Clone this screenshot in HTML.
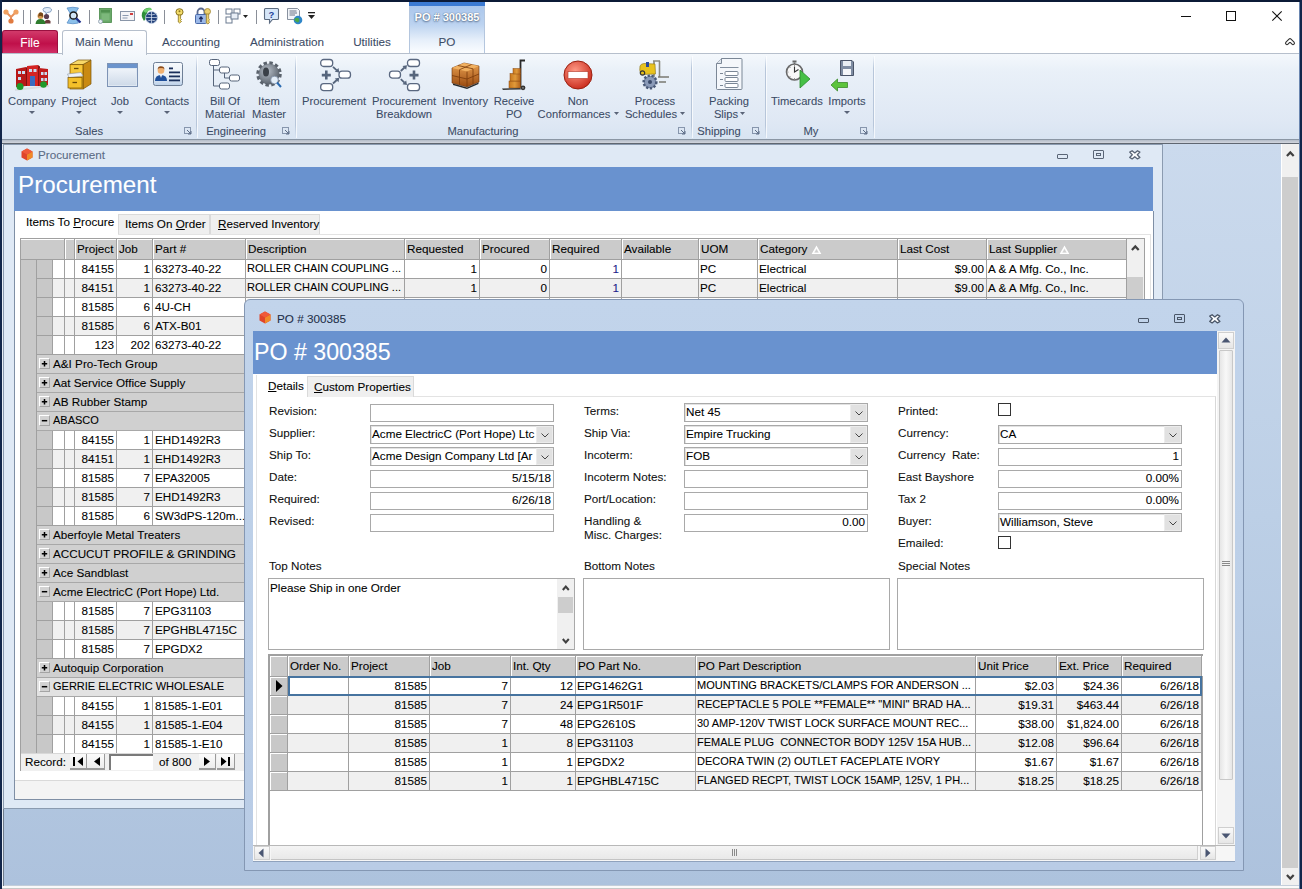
<!DOCTYPE html><html><head><meta charset="utf-8"><style>
*{box-sizing:border-box}
html,body{margin:0;padding:0}
body{width:1302px;height:889px;overflow:hidden;position:relative;background:#fff;font-family:"Liberation Sans",sans-serif;font-size:11.7px;color:#000}
.t{position:absolute;white-space:nowrap;line-height:15px;-webkit-text-stroke:0.08px currentColor}
.a{position:absolute}
svg.a{overflow:visible}
</style></head><body><div class="a" style="left:0px;top:0px;width:1302px;height:53px;background:#fff"></div>
<svg class="a" style="left:3px;top:8px;" width="16" height="16" viewBox="0 0 16 16"><line x1="3" y1="4" x2="8" y2="9" stroke="#e8905a" stroke-width="2"/><line x1="13" y1="4" x2="8" y2="9" stroke="#e8905a" stroke-width="2"/><line x1="8" y1="9" x2="8" y2="13" stroke="#e8905a" stroke-width="2"/><circle cx="3" cy="4" r="2.6" fill="#f0a060"/><circle cx="13" cy="4" r="2.6" fill="#f0a060"/><circle cx="8" cy="13" r="2.6" fill="#e07a40"/></svg>
<div class="a" style="left:23px;top:10px;width:1px;height:14px;background:#8a8f98"></div>
<div class="a" style="left:30px;top:10px;width:1px;height:14px;background:#8a8f98"></div>
<svg class="a" style="left:35px;top:7px;" width="17" height="17" viewBox="0 0 17 17"><path d="M8 2.5 Q8 0.5 12 0.5 Q16.5 0.5 16.5 3 Q16.5 5.5 12.5 5.5 L11 7 L11 5.3 Q8 5 8 2.5Z" fill="#e4eef9" stroke="#6f8fb5" stroke-width=".8"/><circle cx="11.5" cy="9.5" r="2.6" fill="#5a3f52"/><path d="M8 16.5 Q11.5 10.5 15.5 14 L15.5 16.5Z" fill="#6a3a3a"/><circle cx="5.5" cy="9" r="3" fill="#d59a52"/><path d="M4 6 Q5.5 4.5 8 6.5 L8 10 Q5 8 3 10Z" fill="#7a4a1a"/><path d="M0.5 17 Q1 12 5.5 12 Q10 12 10.5 17Z" fill="#2f7d2f"/></svg>
<div class="a" style="left:58px;top:10px;width:1px;height:14px;background:#8a8f98"></div>
<svg class="a" style="left:66px;top:7px;" width="16" height="17" viewBox="0 0 16 17"><path d="M1 1 Q7 -0.5 12.5 1 L9.5 6 Q8 8.5 9.5 11 L12.5 16 Q7 17.5 1 16 L4 11 Q5.5 8.5 4 6Z" fill="#8cc0ea" stroke="#5a8fc8" stroke-width=".8"/><circle cx="7.5" cy="8.5" r="3.6" fill="#eef6fc" fill-opacity=".7" stroke="#1a1a1a" stroke-width="1.5"/><line x1="10.2" y1="11.2" x2="14.5" y2="15.5" stroke="#1c2f8a" stroke-width="2.2"/></svg>
<div class="a" style="left:89px;top:10px;width:1px;height:14px;background:#8a8f98"></div>
<svg class="a" style="left:98px;top:8px;" width="14" height="16" viewBox="0 0 14 16"><rect x="1.5" y="0.5" width="12" height="14" fill="#69a868" stroke="#4a8a4a" stroke-width=".8"/><rect x="3" y="2" width="9" height="2.5" fill="#4f904f"/><rect x="3.5" y="5.5" width="8" height="7" fill="#7cb87b"/><circle cx="2.5" cy="13.5" r="2" fill="#e6eef4" stroke="#8a9aa8" stroke-width=".8"/></svg>
<svg class="a" style="left:120px;top:10px;" width="15" height="12" viewBox="0 0 15 12"><rect x="0.5" y="1.5" width="14" height="9" fill="#f4f4f6" stroke="#8a96a8"/><line x1="2.5" y1="5.5" x2="8.5" y2="5.5" stroke="#8090a8" stroke-width=".9"/><line x1="2.5" y1="8" x2="7.5" y2="8" stroke="#8090a8" stroke-width=".9"/><rect x="10" y="3" width="3" height="2" fill="#d04040"/></svg>
<svg class="a" style="left:141px;top:7px;" width="17" height="17" viewBox="0 0 17 17"><path d="M3 14 Q-1 8 2 4 Q5 0 10 1 Q6 3 6 7 Q6 11 3 14Z" fill="#2e8f3a"/><path d="M2 4 Q5 0.5 10 1 L11 3 Q7 3 5 6Z" fill="#6fcf6f"/><circle cx="10.5" cy="10.5" r="6" fill="#22407a" stroke="#c8d4e6" stroke-width=".8"/><path d="M4.8 10.5 H16.2 M10.5 4.5 V16.5 M6.5 7 Q10.5 9 14.5 7 M6.5 14 Q10.5 12 14.5 14" stroke="#dfe8f5" stroke-width=".7" fill="none"/></svg>
<div class="a" style="left:164px;top:10px;width:1px;height:14px;background:#8a8f98"></div>
<svg class="a" style="left:175px;top:8px;" width="9" height="16" viewBox="0 0 9 16"><ellipse cx="4.5" cy="4" rx="3.6" ry="3.3" fill="#f3dc6a" stroke="#8a7420" stroke-width="1"/><circle cx="4.5" cy="3.3" r="1" fill="#8a7420"/><path d="M3.3 7 V14 L4.5 15 L6.5 13.5 L5.5 12.5 L6.5 11.5 L5.5 10.5 L5.7 7Z" fill="#f3dc6a" stroke="#8a7420" stroke-width=".8"/></svg>
<svg class="a" style="left:194px;top:7px;" width="17" height="17" viewBox="0 0 17 17"><path d="M3.5 8 V5 A3.5 3.5 0 0 1 10.5 5 V8" fill="none" stroke="#5a6a90" stroke-width="1.8"/><rect x="1.5" y="7.5" width="11" height="9" rx="1" fill="#9bb8e8" stroke="#4a6aa8"/><path d="M7 15 V10.5 M5.3 12 L7 10 L8.7 12" stroke="#1a2a60" stroke-width="1.3" fill="none"/><ellipse cx="13.5" cy="4.5" rx="3" ry="3" fill="#ecd070" stroke="#9a8030" stroke-width=".8"/><path d="M12.3 7 V16 L14 17 L15.5 15.5 L14.7 14 L15.5 12.5 L14.7 11.5 V7Z" fill="#ecd070" stroke="#9a8030" stroke-width=".8"/></svg>
<div class="a" style="left:218px;top:10px;width:1px;height:14px;background:#8a8f98"></div>
<svg class="a" style="left:225px;top:8px;" width="24" height="16" viewBox="0 0 24 16"><rect x="1" y="1" width="6" height="5" fill="#fff" stroke="#6a7a90"/><rect x="9" y="1" width="6" height="5" fill="#fff" stroke="#6a7a90"/><rect x="1" y="9" width="6" height="6" fill="#fff" stroke="#6a7a90"/><rect x="6" y="5" width="7" height="6" fill="#e8eef6" stroke="#6a7a90"/><path d="M18 7 L23 7 L20.5 10Z" fill="#222"/></svg>
<div class="a" style="left:256px;top:10px;width:1px;height:14px;background:#8a8f98"></div>
<svg class="a" style="left:264px;top:8px;" width="15" height="16" viewBox="0 0 15 16"><path d="M1.5 0.5 H13.5 Q14.5 0.5 14.5 1.5 V10.5 Q14.5 11.5 13.5 11.5 H8.5 L5.5 15 V11.5 H1.5 Q0.5 11.5 0.5 10.5 V1.5 Q0.5 0.5 1.5 0.5Z" fill="#d6e6f8" stroke="#5c6b80" stroke-width="1.1"/><text x="7.5" y="9.5" font-size="9.5" font-family="Liberation Sans" font-weight="bold" text-anchor="middle" fill="#243f9a">?</text></svg>
<svg class="a" style="left:287px;top:8px;" width="16" height="17" viewBox="0 0 16 17"><path d="M0.5 0.5 H10.5 L12.5 2.5 V11.5 H0.5Z" fill="#f2f5f9" stroke="#7a8494" stroke-width=".9"/><path d="M2.5 3 H9.5 M2.5 5 H10 M2.5 7 H8" stroke="#5a6478" stroke-width=".9"/><circle cx="11" cy="12" r="4.3" fill="#2f86c8"/><path d="M7.5 11 Q9.5 9 12 10.5 Q13 12.5 11 14.5 Q9 14 7.5 12.5Z" fill="#4aa84a"/></svg>
<svg class="a" style="left:307px;top:12px;" width="9" height="8" viewBox="0 0 9 8"><rect x="1" y="0" width="7" height="1.3" fill="#222"/><path d="M1 3 L8 3 L4.5 7Z" fill="#222"/></svg>
<div class="a" style="left:409px;top:1px;width:76px;height:52px;background:linear-gradient(#a6c3ea,#bcd3f0 45%,#e6effa 75%,#fbfdff);border-left:1px solid #b4c6de;border-right:1px solid #b4c6de"></div>
<div class="a" style="left:409px;top:1px;width:76px;height:5px;background:#3b7ad2"></div>
<div class="t" style="left:297px;top:10px;width:300px;text-align:center;color:#fff;font-size:11px;text-shadow:0 0 1px #3a5070,0 1px 2px #5a7090"><b>PO # 300385</b></div>
<div class="a" style="left:1181px;top:16px;width:10px;height:1px;background:#111"></div>
<div class="a" style="left:1226px;top:11px;width:10px;height:10px;border:1px solid #111"></div>
<svg class="a" style="left:1272px;top:11px;" width="10" height="10" viewBox="0 0 10 10"><line x1="0.3" y1="0.3" x2="9.7" y2="9.7" stroke="#111" stroke-width="1.1"/><line x1="9.7" y1="0.3" x2="0.3" y2="9.7" stroke="#111" stroke-width="1.1"/></svg>
<svg class="a" style="left:1285px;top:38px;" width="10" height="8" viewBox="0 0 10 8"><path d="M2 5.2 L5 2.2 L8 5.2" fill="none" stroke="#333" stroke-width="4" stroke-linecap="round" stroke-linejoin="round"/><path d="M2 5.2 L5 2.2 L8 5.2" fill="none" stroke="#fff" stroke-width="1.8" stroke-linecap="round" stroke-linejoin="round"/></svg>
<div class="a" style="left:2px;top:30px;width:56px;height:24px;background:linear-gradient(#d23a6a,#c0104a 55%,#d2346a);border:1px solid #9a1040;border-bottom:none;border-radius:3px 3px 0 0"></div>
<div class="t" style="left:-120px;top:36px;width:300px;text-align:center;color:#fff;font-size:12px">File</div>
<div class="a" style="left:2px;top:53px;width:1298px;height:86px;background:linear-gradient(#f4f8fc,#e9f0f8 20%,#dfe8f4 80%,#d8e4f2);border-top:1px solid #b6bfcc"></div>
<div class="a" style="left:62px;top:30px;width:85px;height:25px;background:linear-gradient(#fff,#f3f7fc);border:1px solid #b6bfcc;border-bottom:none;border-radius:3px 3px 0 0"></div>
<div class="t" style="left:-46px;top:34px;width:300px;text-align:center;color:#3c4c66">Main Menu</div>
<div class="t" style="left:41px;top:34px;width:300px;text-align:center;color:#3c4c66">Accounting</div>
<div class="t" style="left:137px;top:34px;width:300px;text-align:center;color:#3c4c66">Administration</div>
<div class="t" style="left:222px;top:34px;width:300px;text-align:center;color:#3c4c66">Utilities</div>
<div class="t" style="left:297px;top:34px;width:300px;text-align:center;color:#3c4c66">PO</div>
<svg class="a" style="left:15px;top:64px;" width="34" height="27" viewBox="0 0 34 27"><path d="M1 5 L11 3 V22 L1 23Z" fill="#b81818"/><path d="M11 3 L13 4 V22 L11 22Z" fill="#801010"/><path d="M12 2 L23 1 V22 L12 22Z" fill="#d42424"/><path d="M23 1 L25 2.5 V22 H23Z" fill="#8a1212"/><path d="M24 4 L33 5 V22 L24 22Z" fill="#c01c1c"/><g fill="#c8dcf0"><rect x="3" y="7" width="3" height="3"/><rect x="3" y="13" width="3" height="3"/><rect x="7" y="7" width="3" height="3"/><rect x="14" y="5" width="3" height="3"/><rect x="18.5" y="5" width="3" height="3"/><rect x="26" y="8" width="2.5" height="3"/><rect x="29.5" y="8" width="2.5" height="3"/><rect x="26" y="14" width="2.5" height="3"/><rect x="29.5" y="14" width="2.5" height="3"/></g><rect x="15" y="12" width="5" height="10" fill="#3a6ac0"/><path d="M0 25 L34 21 V23 L0 27Z" fill="#d8dde4"/><circle cx="5" cy="22.5" r="3.5" fill="#1f9a2a"/><circle cx="28.5" cy="20.5" r="3.3" fill="#1f9a2a"/></svg>
<div class="t" style="left:-118px;top:94px;width:300px;text-align:center;color:#3c4c66;font-size:11.2px">Company</div>
<svg class="a" style="left:29px;top:111px;" width="6" height="4" viewBox="0 0 6 4"><path d="M0 0 L6 0 L3 3Z" fill="#5a6478"/></svg>
<svg class="a" style="left:66px;top:59px;" width="27" height="32" viewBox="0 0 27 32"><path d="M17 5.5 L25 1 V25 L17 30Z" fill="#c98a12" stroke="#7a5508" stroke-width=".7"/><path d="M4 5.5 L12 1 H25 L17 5.5Z" fill="#f8d868" stroke="#7a5508" stroke-width=".7"/><rect x="4" y="5.5" width="13" height="24.5" fill="#f2b822" stroke="#7a5508" stroke-width=".7"/><rect x="5" y="6.5" width="11" height="7" fill="#f6c83a"/><path d="M8 9.5 H12.5" stroke="#6a4a08" stroke-width="1.3"/><path d="M1.5 15 L15 13.5 L17 17 L3 18.5Z" fill="#eef2f7" stroke="#8a96a6" stroke-width=".6"/><rect x="2" y="18.5" width="14" height="10.5" fill="#f4c02a" stroke="#7a5508" stroke-width=".7"/><path d="M6.5 23.5 H11" stroke="#6a4a08" stroke-width="1.3"/></svg>
<div class="t" style="left:-71px;top:94px;width:300px;text-align:center;color:#3c4c66;font-size:11.2px">Project</div>
<svg class="a" style="left:76px;top:111px;" width="6" height="4" viewBox="0 0 6 4"><path d="M0 0 L6 0 L3 3Z" fill="#5a6478"/></svg>
<svg class="a" style="left:107px;top:63px;" width="31" height="24" viewBox="0 0 31 24"><rect x="0.5" y="0.5" width="30" height="23" fill="#dfe8f2" stroke="#7d93b5"/><rect x="1" y="1" width="29" height="4" fill="#6c94cc"/><rect x="2" y="6" width="27" height="16" fill="url(#jg)"/><defs><linearGradient id="jg" x1="0" y1="0" x2="0" y2="1"><stop offset="0" stop-color="#eef3f9"/><stop offset="1" stop-color="#cfdbe9"/></linearGradient></defs></svg>
<div class="t" style="left:-30px;top:94px;width:300px;text-align:center;color:#3c4c66;font-size:11.2px">Job</div>
<svg class="a" style="left:117px;top:111px;" width="6" height="4" viewBox="0 0 6 4"><path d="M0 0 L6 0 L3 3Z" fill="#5a6478"/></svg>
<svg class="a" style="left:153px;top:62px;" width="31" height="24" viewBox="0 0 31 24"><defs><linearGradient id="cg" x1="0" y1="0" x2="0" y2="1"><stop offset="0" stop-color="#f6f9fc"/><stop offset=".6" stop-color="#e8eff7"/><stop offset="1" stop-color="#bcd0e8"/></linearGradient></defs><rect x="0.5" y="0.5" width="29" height="23" rx="2" fill="url(#cg)" stroke="#6e7f96"/><circle cx="8" cy="8.5" r="3.3" fill="#f0b070"/><path d="M4.6 7.5 Q5 4 8 4.3 Q11.5 4.3 11.4 7.5 Q10 5.8 8 6.2 Q6 5.8 4.6 7.5Z" fill="#8a4a1a"/><path d="M2 19 Q2 13 8 13 Q14 13 14 19Z" fill="#1f4f9a"/><path d="M7 13 L8 16 L9 13Z" fill="#fff"/><rect x="16" y="5.5" width="4" height="1.8" fill="#1a2f5a"/><rect x="16" y="9.5" width="11" height="1.8" fill="#1a2f5a"/><rect x="16" y="13.5" width="11" height="1.8" fill="#1a2f5a"/><rect x="16" y="17.5" width="11" height="1.8" fill="#1a2f5a"/></svg>
<div class="t" style="left:17px;top:94px;width:300px;text-align:center;color:#3c4c66;font-size:11.2px">Contacts</div>
<svg class="a" style="left:164px;top:111px;" width="6" height="4" viewBox="0 0 6 4"><path d="M0 0 L6 0 L3 3Z" fill="#5a6478"/></svg>
<div class="t" style="left:-61px;top:124px;width:300px;text-align:center;color:#3c4c66;font-size:11.2px">Sales</div>
<svg class="a" style="left:184px;top:127px;" width="8" height="8" viewBox="0 0 8 8"><rect x="0.5" y="0.5" width="6" height="6" fill="none" stroke="#8796ad"/><path d="M3 3 L7 7 M7 4 V7 H4" stroke="#5d6d86" fill="none"/></svg>
<div class="a" style="left:196px;top:56px;width:1px;height:82px;background:linear-gradient(rgba(180,196,218,0),#b7c6da 15%,#b7c6da 85%,rgba(180,196,218,0))"></div>
<div class="a" style="left:197px;top:56px;width:1px;height:82px;background:rgba(255,255,255,.7)"></div>
<svg class="a" style="left:208px;top:59px;" width="33" height="31" viewBox="0 0 33 31"><path d="M5.5 6.5 V27 H11.5 M5.5 11 H11.5 M16.5 14 V19 H21.5" fill="none" stroke="#56647a" stroke-width="1"/><g fill="#fff" stroke="#56647a" stroke-width="1"><rect x="1.5" y="0.5" width="10" height="6" rx="2"/><rect x="11.5" y="8" width="10" height="6" rx="2"/><rect x="21.5" y="16" width="10" height="6" rx="2"/><rect x="11.5" y="24" width="10" height="6" rx="2"/></g></svg>
<div class="t" style="left:75px;top:94px;width:300px;text-align:center;color:#3c4c66;font-size:11.2px">Bill Of</div>
<div class="t" style="left:75px;top:107px;width:300px;text-align:center;color:#3c4c66;font-size:11.2px">Material</div>
<svg class="a" style="left:255px;top:60px;" width="30" height="30" viewBox="0 0 30 30"><defs><radialGradient id="gg" cx=".4" cy=".35" r=".8"><stop offset="0" stop-color="#b8c0ca"/><stop offset="1" stop-color="#4a525c"/></radialGradient></defs><circle cx="14" cy="14" r="10.5" fill="url(#gg)" stroke="#5a626c" stroke-width="4.5" stroke-dasharray="3.2 2.3"/><circle cx="14" cy="14" r="10" fill="url(#gg)"/><ellipse cx="11" cy="12" rx="3" ry="4.5" fill="#3a4048"/><circle cx="19.5" cy="20" r="3.8" fill="#e4eef8" stroke="#8090a8" stroke-width=".8"/><line x1="22" y1="22.5" x2="26" y2="27" stroke="#2a6ab0" stroke-width="2"/></svg>
<div class="t" style="left:119px;top:94px;width:300px;text-align:center;color:#3c4c66;font-size:11.2px">Item</div>
<div class="t" style="left:119px;top:107px;width:300px;text-align:center;color:#3c4c66;font-size:11.2px">Master</div>
<div class="t" style="left:86px;top:124px;width:300px;text-align:center;color:#3c4c66;font-size:11.2px">Engineering</div>
<svg class="a" style="left:282px;top:127px;" width="8" height="8" viewBox="0 0 8 8"><rect x="0.5" y="0.5" width="6" height="6" fill="none" stroke="#8796ad"/><path d="M3 3 L7 7 M7 4 V7 H4" stroke="#5d6d86" fill="none"/></svg>
<div class="a" style="left:295px;top:56px;width:1px;height:82px;background:linear-gradient(rgba(180,196,218,0),#b7c6da 15%,#b7c6da 85%,rgba(180,196,218,0))"></div>
<div class="a" style="left:296px;top:56px;width:1px;height:82px;background:rgba(255,255,255,.7)"></div>
<svg class="a" style="left:320px;top:58px;" width="32" height="34" viewBox="0 0 32 34"><defs><marker id="ah" markerWidth="4" markerHeight="4" refX="2" refY="2" orient="auto" markerUnits="userSpaceOnUse"><path d="M0 0 L4 2 L0 4Z" fill="#56657c"/></marker></defs><g fill="#fff" stroke="#5a6880" stroke-width="1.3"><rect x="0.7" y="1.5" width="12" height="7" rx="3"/><rect x="19" y="13.2" width="11.5" height="7" rx="3"/><rect x="0.7" y="25.7" width="12" height="7" rx="3"/></g><path d="M6.3 12.6 V21.6 M1.8 17.1 H10.8" stroke="#56657c" stroke-width="2.6"/><path d="M13 8.8 L16.8 12.3 M13 25.5 L16.8 22" stroke="#56657c" stroke-width="1.8"/><path d="M19.3 14.6 L14.8 13.8 L18.5 10.1Z M19.3 19.7 L18.5 24.2 L14.8 20.5Z" fill="#56657c"/></svg>
<div class="t" style="left:184px;top:94px;width:300px;text-align:center;color:#3c4c66;font-size:11.2px">Procurement</div>
<svg class="a" style="left:388px;top:58px;" width="33" height="34" viewBox="0 0 33 34"><g fill="#fff" stroke="#5a6880" stroke-width="1.3"><rect x="1.5" y="13.2" width="11" height="7" rx="3"/><rect x="19.5" y="1.5" width="12" height="7" rx="3"/><rect x="19.5" y="25.7" width="12" height="7" rx="3"/></g><path d="M26 12.6 V21.6 M21.5 17.1 H30.5" stroke="#56657c" stroke-width="2.6"/><path d="M12.8 13 L16.5 9.5 M12.8 21.2 L16.5 24.7" stroke="#56657c" stroke-width="1.8"/><path d="M19 7.2 L18.2 11.7 L14.5 8Z M19 27 L14.5 26.2 L18.2 22.5Z" fill="#56657c"/></svg>
<div class="t" style="left:254px;top:94px;width:300px;text-align:center;color:#3c4c66;font-size:11.2px">Procurement</div>
<div class="t" style="left:254px;top:107px;width:300px;text-align:center;color:#3c4c66;font-size:11.2px">Breakdown</div>
<svg class="a" style="left:450px;top:61px;" width="31" height="29" viewBox="0 0 31 29"><defs><linearGradient id="ig" x1="0" y1="0" x2="0" y2="1"><stop offset="0" stop-color="#e8a050"/><stop offset="1" stop-color="#9a4a10"/></linearGradient></defs><path d="M2 7 L14 2 L29 5 L29 21 L17 26 L2 22Z" fill="url(#ig)" stroke="#6a3008" stroke-width=".6"/><path d="M2 7 L17 10.5 L29 5 L14 2Z" fill="#f0b060"/><path d="M17 10.5 V26 M2 14.5 L17 18 L29 13 M9.5 8.7 V24 M23 7.8 V23.5 M8 4.5 L23 7.8 M21.5 3.5 L9.5 8.7" stroke="#7a3a0a" stroke-width=".8" fill="none"/><path d="M3 22.5 L17 26.5 L28.5 21.5 L28.5 23 L17 28 L3 24Z" fill="#2a2a2a"/></svg>
<div class="t" style="left:315px;top:94px;width:300px;text-align:center;color:#3c4c66;font-size:11.2px">Inventory</div>
<svg class="a" style="left:501px;top:59px;" width="27" height="32" viewBox="0 0 27 32"><defs><linearGradient id="bx" x1="0" y1="0" x2="1" y2="0"><stop offset="0" stop-color="#c8781e"/><stop offset=".5" stop-color="#e09a3a"/><stop offset="1" stop-color="#b0601a"/></linearGradient></defs><path d="M24 1.5 H19.5 V28.5" fill="none" stroke="#2a2a2a" stroke-width="1.8"/><rect x="8" y="22" width="11.5" height="7" fill="url(#bx)" stroke="#8a4a10" stroke-width=".5"/><rect x="9" y="14.5" width="10.5" height="7.5" fill="url(#bx)" stroke="#8a4a10" stroke-width=".5"/><rect x="12" y="9.5" width="7.5" height="5.5" fill="url(#bx)" stroke="#8a4a10" stroke-width=".5"/><path d="M1 29.5 L19.5 29 L20 30.5 L2 31Z" fill="#3a3a3a"/><circle cx="22" cy="28.8" r="2.4" fill="#333"/><circle cx="22" cy="28.8" r=".9" fill="#888"/></svg>
<div class="t" style="left:364px;top:94px;width:300px;text-align:center;color:#3c4c66;font-size:11.2px">Receive</div>
<div class="t" style="left:364px;top:107px;width:300px;text-align:center;color:#3c4c66;font-size:11.2px">PO</div>
<svg class="a" style="left:562px;top:60px;" width="32" height="30" viewBox="0 0 32 30"><defs><radialGradient id="nc" cx=".4" cy=".35" r=".7"><stop offset="0" stop-color="#ff9a86"/><stop offset="1" stop-color="#c8281a"/></radialGradient></defs><circle cx="16" cy="15" r="14" fill="url(#nc)" stroke="#9a2010"/><rect x="6" y="11.5" width="20" height="7" fill="#fff" stroke="#b03020" stroke-width=".6"/></svg>
<div class="t" style="left:428px;top:94px;width:300px;text-align:center;color:#3c4c66;font-size:11.2px">Non</div>
<div class="t" style="left:424px;top:107px;width:300px;text-align:center;color:#3c4c66;font-size:11.2px">Conformances</div>
<svg class="a" style="left:614px;top:112px;" width="5" height="3" viewBox="0 0 5 3"><path d="M0 0 L5 0 L2.5 3Z" fill="#5a6478"/></svg>
<svg class="a" style="left:638px;top:58px;" width="33" height="33" viewBox="0 0 33 33"><path d="M15 3 H22 M16 3 V19 M21.5 3 V19" stroke="#8a8a80" stroke-width="1.6" fill="none"/><path d="M2 8 Q3 5.5 6 5.5 L17 6 L17.5 16 L3 16.5 Q1 12 2 8Z" fill="#e8c21e" stroke="#8a7010" stroke-width=".6"/><rect x="8" y="4" width="3" height="5" fill="#2a4a9a"/><circle cx="4.5" cy="15" r="2.2" fill="none" stroke="#333" stroke-width="1.2"/><path d="M20 19 H31 M21 24 H28" stroke="#7a7a72" stroke-width="1.4"/><circle cx="12" cy="24" r="6.3" fill="#7a8aa8" stroke="#4a5a78" stroke-width="2.6" stroke-dasharray="2.2 1.6"/><circle cx="12" cy="24" r="5" fill="#8a9ab8"/><circle cx="12" cy="24" r="2" fill="#3a4a6a"/></svg>
<div class="t" style="left:505px;top:94px;width:300px;text-align:center;color:#3c4c66;font-size:11.2px">Process</div>
<div class="t" style="left:501px;top:107px;width:300px;text-align:center;color:#3c4c66;font-size:11.2px">Schedules</div>
<svg class="a" style="left:680px;top:112px;" width="5" height="3" viewBox="0 0 5 3"><path d="M0 0 L5 0 L2.5 3Z" fill="#5a6478"/></svg>
<div class="t" style="left:333px;top:124px;width:300px;text-align:center;color:#3c4c66;font-size:11.2px">Manufacturing</div>
<svg class="a" style="left:678px;top:127px;" width="8" height="8" viewBox="0 0 8 8"><rect x="0.5" y="0.5" width="6" height="6" fill="none" stroke="#8796ad"/><path d="M3 3 L7 7 M7 4 V7 H4" stroke="#5d6d86" fill="none"/></svg>
<div class="a" style="left:691px;top:56px;width:1px;height:82px;background:linear-gradient(rgba(180,196,218,0),#b7c6da 15%,#b7c6da 85%,rgba(180,196,218,0))"></div>
<div class="a" style="left:692px;top:56px;width:1px;height:82px;background:rgba(255,255,255,.7)"></div>
<svg class="a" style="left:715px;top:58px;" width="28" height="32" viewBox="0 0 28 32"><path d="M6.5 0.5 H26 Q27 0.5 27 1.5 V30.5 Q27 31.5 26 31.5 H2.5 Q1.5 31.5 1.5 30.5 V5.5Z" fill="#f4f7fb" stroke="#7b8796"/><path d="M1.5 5.5 H6.5 V0.5" fill="#dfe6ee" stroke="#7b8796"/><path d="M5 9.5 H23.5" stroke="#8390a0" stroke-width="1"/><g fill="#fff" stroke="#7b8796"><rect x="10" y="13.5" width="13" height="4" rx="1"/><rect x="10" y="19.5" width="13" height="4" rx="1"/><rect x="10" y="25.5" width="13" height="4" rx="1"/></g><path d="M5 15.5 H8 M5 21.5 H8 M5 27.5 H8" stroke="#7b8796"/></svg>
<div class="t" style="left:579px;top:94px;width:300px;text-align:center;color:#3c4c66;font-size:11.2px">Packing</div>
<div class="t" style="left:576px;top:107px;width:300px;text-align:center;color:#3c4c66;font-size:11.2px">Slips</div>
<svg class="a" style="left:740px;top:112px;" width="5" height="3" viewBox="0 0 5 3"><path d="M0 0 L5 0 L2.5 3Z" fill="#5a6478"/></svg>
<div class="t" style="left:569px;top:124px;width:300px;text-align:center;color:#3c4c66;font-size:11.2px">Shipping</div>
<svg class="a" style="left:752px;top:127px;" width="8" height="8" viewBox="0 0 8 8"><rect x="0.5" y="0.5" width="6" height="6" fill="none" stroke="#8796ad"/><path d="M3 3 L7 7 M7 4 V7 H4" stroke="#5d6d86" fill="none"/></svg>
<div class="a" style="left:765px;top:56px;width:1px;height:82px;background:linear-gradient(rgba(180,196,218,0),#b7c6da 15%,#b7c6da 85%,rgba(180,196,218,0))"></div>
<div class="a" style="left:766px;top:56px;width:1px;height:82px;background:rgba(255,255,255,.7)"></div>
<svg class="a" style="left:785px;top:60px;" width="28" height="30" viewBox="0 0 28 30"><rect x="7.5" y="0.5" width="4" height="2" fill="#666"/><path d="M9.5 2.5 V4" stroke="#666" stroke-width="1.5"/><circle cx="9.5" cy="12" r="8" fill="#f8f8f8" stroke="#6a6a6a" stroke-width="1.6"/><path d="M9.5 6.5 V12 L13.5 9.5" stroke="#333" stroke-width="1.1" fill="none"/><g fill="#777"><circle cx="9.5" cy="5.5" r=".5"/><circle cx="16" cy="12" r=".5"/><circle cx="3" cy="12" r=".5"/><circle cx="9.5" cy="18.5" r=".5"/><circle cx="5" cy="7.5" r=".5"/><circle cx="5" cy="16.5" r=".5"/></g><path d="M15 10 L25 19 L15 28Z" fill="#46c046" stroke="#2a8a2a" stroke-width=".8"/></svg>
<div class="t" style="left:647px;top:94px;width:300px;text-align:center;color:#3c4c66;font-size:11.2px">Timecards</div>
<svg class="a" style="left:830px;top:59px;" width="26" height="32" viewBox="0 0 26 32"><path d="M10.5 1.5 H22 L23.5 3 V16.5 H10.5Z" fill="#7e8ca2" stroke="#4a5468"/><rect x="13" y="2" width="8" height="5" fill="#e8edf3"/><rect x="13" y="10" width="8" height="6" fill="#f4f6f9"/><path d="M1 26 L7.5 20 V23.5 H17.5 V28.5 H7.5 V32Z" fill="#5cc43c" stroke="#3a8a2a" stroke-width=".8"/></svg>
<div class="t" style="left:697px;top:94px;width:300px;text-align:center;color:#3c4c66;font-size:11.2px">Imports</div>
<svg class="a" style="left:844px;top:111px;" width="6" height="4" viewBox="0 0 6 4"><path d="M0 0 L6 0 L3 3Z" fill="#5a6478"/></svg>
<div class="t" style="left:661px;top:124px;width:300px;text-align:center;color:#3c4c66;font-size:11.2px">My</div>
<svg class="a" style="left:860px;top:127px;" width="8" height="8" viewBox="0 0 8 8"><rect x="0.5" y="0.5" width="6" height="6" fill="none" stroke="#8796ad"/><path d="M3 3 L7 7 M7 4 V7 H4" stroke="#5d6d86" fill="none"/></svg>
<div class="a" style="left:873px;top:56px;width:1px;height:82px;background:linear-gradient(rgba(180,196,218,0),#b7c6da 15%,#b7c6da 85%,rgba(180,196,218,0))"></div>
<div class="a" style="left:874px;top:56px;width:1px;height:82px;background:rgba(255,255,255,.7)"></div>
<div class="a" style="left:2px;top:139px;width:1298px;height:1px;background:#8a96a4"></div>
<div class="a" style="left:2px;top:140px;width:1298px;height:3px;background:linear-gradient(#b4bcc8,#d2d6de)"></div>
<div class="a" style="left:2px;top:143px;width:1298px;height:1px;background:#5f6670"></div>
<div class="a" style="left:2px;top:144px;width:1298px;height:742px;background:linear-gradient(#cbdaed,#bccfe6 50%,#adc2dd)"></div>
<div class="a" style="left:2px;top:885px;width:1298px;height:4px;background:#fafafa;border-top:1px solid #c4ceda;border-bottom:1px solid #c8c8c8"></div>
<div class="a" style="left:2px;top:144px;width:1px;height:742px;background:#e8eef6"></div>
<div class="a" style="left:3px;top:144px;width:1px;height:742px;background:#6f7c8c"></div>
<div class="a" style="left:1281px;top:144px;width:18px;height:741px;background:#f0f0f0;border-left:1px solid #fff"></div>
<div class="a" style="left:1282px;top:177px;width:16px;height:691px;background:#cdcdcd"></div>
<svg class="a" style="left:1286px;top:151px;" width="9" height="6" viewBox="0 0 9 6"><path d="M0.9 5 L4.3 1.4 L7.7 5" fill="none" stroke="#404040" stroke-width="2.2"/></svg>
<svg class="a" style="left:1286px;top:874px;" width="9" height="6" viewBox="0 0 9 6"><path d="M0.9 1 L4.3 4.6 L7.7 1" fill="none" stroke="#404040" stroke-width="2.2"/></svg>
<div class="a" style="left:3px;top:144px;width:1160px;height:665px;background:#dfe9f5;border:1px solid #8b9bb0"></div>
<svg class="a" style="left:21px;top:148px;" width="12" height="13" viewBox="0 0 12 13"><path d="M6 0.5 L11.5 3.5 L11.5 9.5 L6 12.5 L0.5 9.5 L0.5 3.5Z" fill="#e0452a"/><path d="M6 6.5 L11.5 3.5 L11.5 9.5 L6 12.5Z" fill="#f08a28"/><path d="M6 0.5 L11.5 3.5 L6 6.5 L0.5 3.5Z" fill="#ef5a3a"/></svg>
<div class="t" style="left:38px;top:147px;color:#5b6b85">Procurement</div>
<div class="a" style="left:1057px;top:154px;width:11px;height:5px;border:1.5px solid #5a6576;border-radius:1px"></div>
<div class="a" style="left:1093px;top:150px;width:11px;height:9px;border:1.5px solid #5a6576;border-radius:1px"></div>
<div class="a" style="left:1096px;top:153px;width:5px;height:3px;border:1px solid #5a6576"></div>
<svg class="a" style="left:1129px;top:150px;" width="12" height="10" viewBox="0 0 12 10"><path d="M0.7 2.1 L3.1 0.7 L5.8 2.9 L8.5 0.7 L10.9 2.1 L8.3 4.8 L10.9 7.5 L8.5 8.9 L5.8 6.7 L3.1 8.9 L0.7 7.5 L3.3 4.8Z" fill="#fbfcfe" stroke="#5a6576" stroke-width="1.3" stroke-linejoin="round"/></svg>
<div class="a" style="left:14px;top:167px;width:1139px;height:44px;background:#6992cf"></div>
<div class="t" style="left:18px;top:170px;color:#fff;font-size:24.2px;line-height:30px">Procurement</div>
<div class="a" style="left:14px;top:211px;width:1140px;height:589px;background:#fff;border:1px solid #7f8fa5;border-top:none"></div>
<div class="a" style="left:15px;top:780px;width:1138px;height:19px;background:#f4f4f4;border-top:1px solid #dadada"></div>
<div class="a" style="left:20px;top:234px;width:1130px;height:546px;border-top:1px solid #e3e3e3"></div>
<div class="a" style="left:20px;top:212px;width:98px;height:24px;background:#fff"></div>
<div class="a" style="left:118px;top:214px;width:92px;height:20px;background:#efefef;border:1px solid #dadada;border-bottom:none"></div>
<div class="a" style="left:210px;top:214px;width:110px;height:20px;background:#efefef;border:1px solid #dadada;border-bottom:none"></div>
<div class="t" style="left:26px;top:214px;">Items To <u>P</u>rocure</div>
<div class="t" style="left:125px;top:216px;">Items On <u>O</u>rder</div>
<div class="t" style="left:218px;top:216px;"><u>R</u>eserved Inventory</div>
<div class="a" style="left:20px;top:238px;width:1125px;height:533px;border:1px solid #a0a0a0;background:#fff"></div>
<div class="a" style="left:21px;top:239px;width:1105px;height:20px;background:#cbcbcb;border-top:1px solid #fff"></div>
<div class="a" style="left:21px;top:259px;width:1105px;height:1px;background:#a0a0a0"></div>
<div class="a" style="left:64px;top:239px;width:1px;height:20px;background:#a0a0a0"></div>
<div class="a" style="left:65px;top:239px;width:1px;height:20px;background:#fff"></div>
<div class="a" style="left:74px;top:239px;width:1px;height:20px;background:#a0a0a0"></div>
<div class="a" style="left:75px;top:239px;width:1px;height:20px;background:#fff"></div>
<div class="a" style="left:116px;top:239px;width:1px;height:20px;background:#a0a0a0"></div>
<div class="a" style="left:117px;top:239px;width:1px;height:20px;background:#fff"></div>
<div class="a" style="left:152px;top:239px;width:1px;height:20px;background:#a0a0a0"></div>
<div class="a" style="left:153px;top:239px;width:1px;height:20px;background:#fff"></div>
<div class="a" style="left:245px;top:239px;width:1px;height:20px;background:#a0a0a0"></div>
<div class="a" style="left:246px;top:239px;width:1px;height:20px;background:#fff"></div>
<div class="a" style="left:404px;top:239px;width:1px;height:20px;background:#a0a0a0"></div>
<div class="a" style="left:405px;top:239px;width:1px;height:20px;background:#fff"></div>
<div class="a" style="left:479px;top:239px;width:1px;height:20px;background:#a0a0a0"></div>
<div class="a" style="left:480px;top:239px;width:1px;height:20px;background:#fff"></div>
<div class="a" style="left:549px;top:239px;width:1px;height:20px;background:#a0a0a0"></div>
<div class="a" style="left:550px;top:239px;width:1px;height:20px;background:#fff"></div>
<div class="a" style="left:621px;top:239px;width:1px;height:20px;background:#a0a0a0"></div>
<div class="a" style="left:622px;top:239px;width:1px;height:20px;background:#fff"></div>
<div class="a" style="left:698px;top:239px;width:1px;height:20px;background:#a0a0a0"></div>
<div class="a" style="left:699px;top:239px;width:1px;height:20px;background:#fff"></div>
<div class="a" style="left:757px;top:239px;width:1px;height:20px;background:#a0a0a0"></div>
<div class="a" style="left:758px;top:239px;width:1px;height:20px;background:#fff"></div>
<div class="a" style="left:897px;top:239px;width:1px;height:20px;background:#a0a0a0"></div>
<div class="a" style="left:898px;top:239px;width:1px;height:20px;background:#fff"></div>
<div class="a" style="left:986px;top:239px;width:1px;height:20px;background:#a0a0a0"></div>
<div class="a" style="left:987px;top:239px;width:1px;height:20px;background:#fff"></div>
<div class="a" style="left:1126px;top:239px;width:1px;height:20px;background:#a0a0a0"></div>
<div class="a" style="left:1127px;top:239px;width:1px;height:20px;background:#fff"></div>
<div class="t" style="left:77px;top:241px;">Project</div>
<div class="t" style="left:119px;top:241px;">Job</div>
<div class="t" style="left:155px;top:241px;">Part #</div>
<div class="t" style="left:248px;top:241px;">Description</div>
<div class="t" style="left:407px;top:241px;">Requested</div>
<div class="t" style="left:482px;top:241px;">Procured</div>
<div class="t" style="left:552px;top:241px;">Required</div>
<div class="t" style="left:624px;top:241px;">Available</div>
<div class="t" style="left:701px;top:241px;">UOM</div>
<div class="t" style="left:760px;top:241px;">Category</div>
<div class="t" style="left:900px;top:241px;">Last Cost</div>
<div class="t" style="left:989px;top:241px;">Last Supplier</div>
<svg class="a" style="left:812px;top:246px;" width="9" height="8" viewBox="0 0 9 8"><path d="M4.5 0.8 L8.3 7.5 L0.7 7.5Z" fill="#f4f4f4" stroke="#fff" stroke-width="1.2"/><path d="M4.5 3 L6.5 6.5 L2.5 6.5Z" fill="#d0d0d0"/></svg>
<svg class="a" style="left:1060px;top:246px;" width="9" height="8" viewBox="0 0 9 8"><path d="M4.5 0.8 L8.3 7.5 L0.7 7.5Z" fill="#f4f4f4" stroke="#fff" stroke-width="1.2"/><path d="M4.5 3 L6.5 6.5 L2.5 6.5Z" fill="#d0d0d0"/></svg>
<div class="a" style="left:21px;top:260px;width:15px;height:19px;background:#c8c8c8"></div>
<div class="a" style="left:36px;top:260px;width:1px;height:19px;background:#a0a0a0"></div>
<div class="a" style="left:37px;top:260px;width:15px;height:19px;background:#c8c8c8"></div>
<div class="a" style="left:52px;top:260px;width:1px;height:19px;background:#a0a0a0"></div>
<div class="a" style="left:53px;top:260px;width:1073px;height:18px;background:#fff"></div>
<div class="a" style="left:37px;top:278px;width:1089px;height:1px;background:#a0a0a0"></div>
<div class="a" style="left:64px;top:260px;width:1px;height:19px;background:#a0a0a0"></div>
<div class="a" style="left:74px;top:260px;width:1px;height:19px;background:#a0a0a0"></div>
<div class="a" style="left:116px;top:260px;width:1px;height:19px;background:#a0a0a0"></div>
<div class="a" style="left:152px;top:260px;width:1px;height:19px;background:#a0a0a0"></div>
<div class="a" style="left:245px;top:260px;width:1px;height:19px;background:#a0a0a0"></div>
<div class="a" style="left:404px;top:260px;width:1px;height:19px;background:#a0a0a0"></div>
<div class="a" style="left:479px;top:260px;width:1px;height:19px;background:#a0a0a0"></div>
<div class="a" style="left:549px;top:260px;width:1px;height:19px;background:#a0a0a0"></div>
<div class="a" style="left:621px;top:260px;width:1px;height:19px;background:#a0a0a0"></div>
<div class="a" style="left:698px;top:260px;width:1px;height:19px;background:#a0a0a0"></div>
<div class="a" style="left:757px;top:260px;width:1px;height:19px;background:#a0a0a0"></div>
<div class="a" style="left:897px;top:260px;width:1px;height:19px;background:#a0a0a0"></div>
<div class="a" style="left:986px;top:260px;width:1px;height:19px;background:#a0a0a0"></div>
<div class="t" style="left:-286px;top:261px;width:400px;text-align:right;">84155</div>
<div class="t" style="left:-250px;top:261px;width:400px;text-align:right;">1</div>
<div class="t" style="left:155px;top:261px;">63273-40-22</div>
<div class="t" style="left:247px;top:261px;font-size:11px">ROLLER CHAIN COUPLING ...</div>
<div class="t" style="left:77px;top:261px;width:400px;text-align:right;">1</div>
<div class="t" style="left:147px;top:261px;width:400px;text-align:right;">0</div>
<div class="t" style="left:219px;top:261px;width:400px;text-align:right;color:#1a1a8a">1</div>
<div class="t" style="left:700px;top:261px;">PC</div>
<div class="t" style="left:759px;top:261px;">Electrical</div>
<div class="t" style="left:584px;top:261px;width:400px;text-align:right;">$9.00</div>
<div class="t" style="left:988px;top:261px;">A &amp; A Mfg. Co., Inc.</div>
<div class="a" style="left:21px;top:279px;width:15px;height:19px;background:#c8c8c8"></div>
<div class="a" style="left:36px;top:279px;width:1px;height:19px;background:#a0a0a0"></div>
<div class="a" style="left:37px;top:279px;width:15px;height:19px;background:#c8c8c8"></div>
<div class="a" style="left:52px;top:279px;width:1px;height:19px;background:#a0a0a0"></div>
<div class="a" style="left:53px;top:279px;width:1073px;height:18px;background:#f0f0f0"></div>
<div class="a" style="left:37px;top:297px;width:1089px;height:1px;background:#a0a0a0"></div>
<div class="a" style="left:64px;top:279px;width:1px;height:19px;background:#a0a0a0"></div>
<div class="a" style="left:74px;top:279px;width:1px;height:19px;background:#a0a0a0"></div>
<div class="a" style="left:116px;top:279px;width:1px;height:19px;background:#a0a0a0"></div>
<div class="a" style="left:152px;top:279px;width:1px;height:19px;background:#a0a0a0"></div>
<div class="a" style="left:245px;top:279px;width:1px;height:19px;background:#a0a0a0"></div>
<div class="a" style="left:404px;top:279px;width:1px;height:19px;background:#a0a0a0"></div>
<div class="a" style="left:479px;top:279px;width:1px;height:19px;background:#a0a0a0"></div>
<div class="a" style="left:549px;top:279px;width:1px;height:19px;background:#a0a0a0"></div>
<div class="a" style="left:621px;top:279px;width:1px;height:19px;background:#a0a0a0"></div>
<div class="a" style="left:698px;top:279px;width:1px;height:19px;background:#a0a0a0"></div>
<div class="a" style="left:757px;top:279px;width:1px;height:19px;background:#a0a0a0"></div>
<div class="a" style="left:897px;top:279px;width:1px;height:19px;background:#a0a0a0"></div>
<div class="a" style="left:986px;top:279px;width:1px;height:19px;background:#a0a0a0"></div>
<div class="t" style="left:-286px;top:280px;width:400px;text-align:right;">84151</div>
<div class="t" style="left:-250px;top:280px;width:400px;text-align:right;">1</div>
<div class="t" style="left:155px;top:280px;">63273-40-22</div>
<div class="t" style="left:247px;top:280px;font-size:11px">ROLLER CHAIN COUPLING ...</div>
<div class="t" style="left:77px;top:280px;width:400px;text-align:right;">1</div>
<div class="t" style="left:147px;top:280px;width:400px;text-align:right;">0</div>
<div class="t" style="left:219px;top:280px;width:400px;text-align:right;color:#1a1a8a">1</div>
<div class="t" style="left:700px;top:280px;">PC</div>
<div class="t" style="left:759px;top:280px;">Electrical</div>
<div class="t" style="left:584px;top:280px;width:400px;text-align:right;">$9.00</div>
<div class="t" style="left:988px;top:280px;">A &amp; A Mfg. Co., Inc.</div>
<div class="a" style="left:21px;top:298px;width:15px;height:19px;background:#c8c8c8"></div>
<div class="a" style="left:36px;top:298px;width:1px;height:19px;background:#a0a0a0"></div>
<div class="a" style="left:37px;top:298px;width:15px;height:19px;background:#c8c8c8"></div>
<div class="a" style="left:52px;top:298px;width:1px;height:19px;background:#a0a0a0"></div>
<div class="a" style="left:53px;top:298px;width:1073px;height:18px;background:#fff"></div>
<div class="a" style="left:37px;top:316px;width:1089px;height:1px;background:#a0a0a0"></div>
<div class="a" style="left:64px;top:298px;width:1px;height:19px;background:#a0a0a0"></div>
<div class="a" style="left:74px;top:298px;width:1px;height:19px;background:#a0a0a0"></div>
<div class="a" style="left:116px;top:298px;width:1px;height:19px;background:#a0a0a0"></div>
<div class="a" style="left:152px;top:298px;width:1px;height:19px;background:#a0a0a0"></div>
<div class="a" style="left:245px;top:298px;width:1px;height:19px;background:#a0a0a0"></div>
<div class="a" style="left:404px;top:298px;width:1px;height:19px;background:#a0a0a0"></div>
<div class="a" style="left:479px;top:298px;width:1px;height:19px;background:#a0a0a0"></div>
<div class="a" style="left:549px;top:298px;width:1px;height:19px;background:#a0a0a0"></div>
<div class="a" style="left:621px;top:298px;width:1px;height:19px;background:#a0a0a0"></div>
<div class="a" style="left:698px;top:298px;width:1px;height:19px;background:#a0a0a0"></div>
<div class="a" style="left:757px;top:298px;width:1px;height:19px;background:#a0a0a0"></div>
<div class="a" style="left:897px;top:298px;width:1px;height:19px;background:#a0a0a0"></div>
<div class="a" style="left:986px;top:298px;width:1px;height:19px;background:#a0a0a0"></div>
<div class="t" style="left:-286px;top:299px;width:400px;text-align:right;">81585</div>
<div class="t" style="left:-250px;top:299px;width:400px;text-align:right;">6</div>
<div class="t" style="left:155px;top:299px;">4U-CH</div>
<div class="a" style="left:21px;top:317px;width:15px;height:19px;background:#c8c8c8"></div>
<div class="a" style="left:36px;top:317px;width:1px;height:19px;background:#a0a0a0"></div>
<div class="a" style="left:37px;top:317px;width:15px;height:19px;background:#c8c8c8"></div>
<div class="a" style="left:52px;top:317px;width:1px;height:19px;background:#a0a0a0"></div>
<div class="a" style="left:53px;top:317px;width:1073px;height:18px;background:#f0f0f0"></div>
<div class="a" style="left:37px;top:335px;width:1089px;height:1px;background:#a0a0a0"></div>
<div class="a" style="left:64px;top:317px;width:1px;height:19px;background:#a0a0a0"></div>
<div class="a" style="left:74px;top:317px;width:1px;height:19px;background:#a0a0a0"></div>
<div class="a" style="left:116px;top:317px;width:1px;height:19px;background:#a0a0a0"></div>
<div class="a" style="left:152px;top:317px;width:1px;height:19px;background:#a0a0a0"></div>
<div class="a" style="left:245px;top:317px;width:1px;height:19px;background:#a0a0a0"></div>
<div class="a" style="left:404px;top:317px;width:1px;height:19px;background:#a0a0a0"></div>
<div class="a" style="left:479px;top:317px;width:1px;height:19px;background:#a0a0a0"></div>
<div class="a" style="left:549px;top:317px;width:1px;height:19px;background:#a0a0a0"></div>
<div class="a" style="left:621px;top:317px;width:1px;height:19px;background:#a0a0a0"></div>
<div class="a" style="left:698px;top:317px;width:1px;height:19px;background:#a0a0a0"></div>
<div class="a" style="left:757px;top:317px;width:1px;height:19px;background:#a0a0a0"></div>
<div class="a" style="left:897px;top:317px;width:1px;height:19px;background:#a0a0a0"></div>
<div class="a" style="left:986px;top:317px;width:1px;height:19px;background:#a0a0a0"></div>
<div class="t" style="left:-286px;top:318px;width:400px;text-align:right;">81585</div>
<div class="t" style="left:-250px;top:318px;width:400px;text-align:right;">6</div>
<div class="t" style="left:155px;top:318px;">ATX-B01</div>
<div class="a" style="left:21px;top:336px;width:15px;height:19px;background:#c8c8c8"></div>
<div class="a" style="left:36px;top:336px;width:1px;height:19px;background:#a0a0a0"></div>
<div class="a" style="left:37px;top:336px;width:15px;height:19px;background:#c8c8c8"></div>
<div class="a" style="left:52px;top:336px;width:1px;height:19px;background:#a0a0a0"></div>
<div class="a" style="left:53px;top:336px;width:1073px;height:18px;background:#fff"></div>
<div class="a" style="left:37px;top:354px;width:1089px;height:1px;background:#a0a0a0"></div>
<div class="a" style="left:64px;top:336px;width:1px;height:19px;background:#a0a0a0"></div>
<div class="a" style="left:74px;top:336px;width:1px;height:19px;background:#a0a0a0"></div>
<div class="a" style="left:116px;top:336px;width:1px;height:19px;background:#a0a0a0"></div>
<div class="a" style="left:152px;top:336px;width:1px;height:19px;background:#a0a0a0"></div>
<div class="a" style="left:245px;top:336px;width:1px;height:19px;background:#a0a0a0"></div>
<div class="a" style="left:404px;top:336px;width:1px;height:19px;background:#a0a0a0"></div>
<div class="a" style="left:479px;top:336px;width:1px;height:19px;background:#a0a0a0"></div>
<div class="a" style="left:549px;top:336px;width:1px;height:19px;background:#a0a0a0"></div>
<div class="a" style="left:621px;top:336px;width:1px;height:19px;background:#a0a0a0"></div>
<div class="a" style="left:698px;top:336px;width:1px;height:19px;background:#a0a0a0"></div>
<div class="a" style="left:757px;top:336px;width:1px;height:19px;background:#a0a0a0"></div>
<div class="a" style="left:897px;top:336px;width:1px;height:19px;background:#a0a0a0"></div>
<div class="a" style="left:986px;top:336px;width:1px;height:19px;background:#a0a0a0"></div>
<div class="t" style="left:-286px;top:337px;width:400px;text-align:right;">123</div>
<div class="t" style="left:-250px;top:337px;width:400px;text-align:right;">202</div>
<div class="t" style="left:155px;top:337px;">63273-40-22</div>
<div class="a" style="left:21px;top:355px;width:15px;height:19px;background:#c8c8c8"></div>
<div class="a" style="left:36px;top:355px;width:1px;height:19px;background:#a0a0a0"></div>
<div class="a" style="left:37px;top:355px;width:1089px;height:18px;background:#d0d0d0"></div>
<div class="a" style="left:37px;top:373px;width:1089px;height:1px;background:#a8a8a8"></div>
<div class="a" style="left:39px;top:358px;width:11px;height:11px;background:#d2d2d2;border-left:1px solid #fff;border-top:1px solid #fff;border-right:1px solid #a4a4a4;border-bottom:1px solid #a4a4a4"></div>
<svg class="a" style="left:39px;top:358px;" width="11" height="11" viewBox="0 0 11 11"><path d="M2.8 5.7 H8.2 M5.5 3 V8.4" stroke="#000" stroke-width="1.5"/></svg>
<div class="t" style="left:53px;top:356px;">A&amp;I Pro-Tech Group</div>
<div class="a" style="left:21px;top:374px;width:15px;height:19px;background:#c8c8c8"></div>
<div class="a" style="left:36px;top:374px;width:1px;height:19px;background:#a0a0a0"></div>
<div class="a" style="left:37px;top:374px;width:1089px;height:18px;background:#d0d0d0"></div>
<div class="a" style="left:37px;top:392px;width:1089px;height:1px;background:#a8a8a8"></div>
<div class="a" style="left:39px;top:377px;width:11px;height:11px;background:#d2d2d2;border-left:1px solid #fff;border-top:1px solid #fff;border-right:1px solid #a4a4a4;border-bottom:1px solid #a4a4a4"></div>
<svg class="a" style="left:39px;top:377px;" width="11" height="11" viewBox="0 0 11 11"><path d="M2.8 5.7 H8.2 M5.5 3 V8.4" stroke="#000" stroke-width="1.5"/></svg>
<div class="t" style="left:53px;top:375px;">Aat Service Office Supply</div>
<div class="a" style="left:21px;top:393px;width:15px;height:19px;background:#c8c8c8"></div>
<div class="a" style="left:36px;top:393px;width:1px;height:19px;background:#a0a0a0"></div>
<div class="a" style="left:37px;top:393px;width:1089px;height:18px;background:#d0d0d0"></div>
<div class="a" style="left:37px;top:411px;width:1089px;height:1px;background:#a8a8a8"></div>
<div class="a" style="left:39px;top:396px;width:11px;height:11px;background:#d2d2d2;border-left:1px solid #fff;border-top:1px solid #fff;border-right:1px solid #a4a4a4;border-bottom:1px solid #a4a4a4"></div>
<svg class="a" style="left:39px;top:396px;" width="11" height="11" viewBox="0 0 11 11"><path d="M2.8 5.7 H8.2 M5.5 3 V8.4" stroke="#000" stroke-width="1.5"/></svg>
<div class="t" style="left:53px;top:394px;">AB Rubber Stamp</div>
<div class="a" style="left:21px;top:412px;width:15px;height:19px;background:#c8c8c8"></div>
<div class="a" style="left:36px;top:412px;width:1px;height:19px;background:#a0a0a0"></div>
<div class="a" style="left:37px;top:412px;width:1089px;height:18px;background:#d0d0d0"></div>
<div class="a" style="left:37px;top:430px;width:1089px;height:1px;background:#a8a8a8"></div>
<div class="a" style="left:39px;top:415px;width:11px;height:11px;background:#d2d2d2;border-left:1px solid #fff;border-top:1px solid #fff;border-right:1px solid #a4a4a4;border-bottom:1px solid #a4a4a4"></div>
<svg class="a" style="left:39px;top:415px;" width="11" height="11" viewBox="0 0 11 11"><path d="M2.8 5.7 H8.2" stroke="#000" stroke-width="1.5"/></svg>
<div class="t" style="left:53px;top:413px;font-size:11px">ABASCO</div>
<div class="a" style="left:21px;top:431px;width:15px;height:19px;background:#c8c8c8"></div>
<div class="a" style="left:36px;top:431px;width:1px;height:19px;background:#a0a0a0"></div>
<div class="a" style="left:37px;top:431px;width:15px;height:19px;background:#c8c8c8"></div>
<div class="a" style="left:52px;top:431px;width:1px;height:19px;background:#a0a0a0"></div>
<div class="a" style="left:53px;top:431px;width:1073px;height:18px;background:#fff"></div>
<div class="a" style="left:37px;top:449px;width:1089px;height:1px;background:#a0a0a0"></div>
<div class="a" style="left:64px;top:431px;width:1px;height:19px;background:#a0a0a0"></div>
<div class="a" style="left:74px;top:431px;width:1px;height:19px;background:#a0a0a0"></div>
<div class="a" style="left:116px;top:431px;width:1px;height:19px;background:#a0a0a0"></div>
<div class="a" style="left:152px;top:431px;width:1px;height:19px;background:#a0a0a0"></div>
<div class="a" style="left:245px;top:431px;width:1px;height:19px;background:#a0a0a0"></div>
<div class="a" style="left:404px;top:431px;width:1px;height:19px;background:#a0a0a0"></div>
<div class="a" style="left:479px;top:431px;width:1px;height:19px;background:#a0a0a0"></div>
<div class="a" style="left:549px;top:431px;width:1px;height:19px;background:#a0a0a0"></div>
<div class="a" style="left:621px;top:431px;width:1px;height:19px;background:#a0a0a0"></div>
<div class="a" style="left:698px;top:431px;width:1px;height:19px;background:#a0a0a0"></div>
<div class="a" style="left:757px;top:431px;width:1px;height:19px;background:#a0a0a0"></div>
<div class="a" style="left:897px;top:431px;width:1px;height:19px;background:#a0a0a0"></div>
<div class="a" style="left:986px;top:431px;width:1px;height:19px;background:#a0a0a0"></div>
<div class="t" style="left:-286px;top:432px;width:400px;text-align:right;">84155</div>
<div class="t" style="left:-250px;top:432px;width:400px;text-align:right;">1</div>
<div class="t" style="left:155px;top:432px;">EHD1492R3</div>
<div class="a" style="left:21px;top:450px;width:15px;height:19px;background:#c8c8c8"></div>
<div class="a" style="left:36px;top:450px;width:1px;height:19px;background:#a0a0a0"></div>
<div class="a" style="left:37px;top:450px;width:15px;height:19px;background:#c8c8c8"></div>
<div class="a" style="left:52px;top:450px;width:1px;height:19px;background:#a0a0a0"></div>
<div class="a" style="left:53px;top:450px;width:1073px;height:18px;background:#f0f0f0"></div>
<div class="a" style="left:37px;top:468px;width:1089px;height:1px;background:#a0a0a0"></div>
<div class="a" style="left:64px;top:450px;width:1px;height:19px;background:#a0a0a0"></div>
<div class="a" style="left:74px;top:450px;width:1px;height:19px;background:#a0a0a0"></div>
<div class="a" style="left:116px;top:450px;width:1px;height:19px;background:#a0a0a0"></div>
<div class="a" style="left:152px;top:450px;width:1px;height:19px;background:#a0a0a0"></div>
<div class="a" style="left:245px;top:450px;width:1px;height:19px;background:#a0a0a0"></div>
<div class="a" style="left:404px;top:450px;width:1px;height:19px;background:#a0a0a0"></div>
<div class="a" style="left:479px;top:450px;width:1px;height:19px;background:#a0a0a0"></div>
<div class="a" style="left:549px;top:450px;width:1px;height:19px;background:#a0a0a0"></div>
<div class="a" style="left:621px;top:450px;width:1px;height:19px;background:#a0a0a0"></div>
<div class="a" style="left:698px;top:450px;width:1px;height:19px;background:#a0a0a0"></div>
<div class="a" style="left:757px;top:450px;width:1px;height:19px;background:#a0a0a0"></div>
<div class="a" style="left:897px;top:450px;width:1px;height:19px;background:#a0a0a0"></div>
<div class="a" style="left:986px;top:450px;width:1px;height:19px;background:#a0a0a0"></div>
<div class="t" style="left:-286px;top:451px;width:400px;text-align:right;">84151</div>
<div class="t" style="left:-250px;top:451px;width:400px;text-align:right;">1</div>
<div class="t" style="left:155px;top:451px;">EHD1492R3</div>
<div class="a" style="left:21px;top:469px;width:15px;height:19px;background:#c8c8c8"></div>
<div class="a" style="left:36px;top:469px;width:1px;height:19px;background:#a0a0a0"></div>
<div class="a" style="left:37px;top:469px;width:15px;height:19px;background:#c8c8c8"></div>
<div class="a" style="left:52px;top:469px;width:1px;height:19px;background:#a0a0a0"></div>
<div class="a" style="left:53px;top:469px;width:1073px;height:18px;background:#fff"></div>
<div class="a" style="left:37px;top:487px;width:1089px;height:1px;background:#a0a0a0"></div>
<div class="a" style="left:64px;top:469px;width:1px;height:19px;background:#a0a0a0"></div>
<div class="a" style="left:74px;top:469px;width:1px;height:19px;background:#a0a0a0"></div>
<div class="a" style="left:116px;top:469px;width:1px;height:19px;background:#a0a0a0"></div>
<div class="a" style="left:152px;top:469px;width:1px;height:19px;background:#a0a0a0"></div>
<div class="a" style="left:245px;top:469px;width:1px;height:19px;background:#a0a0a0"></div>
<div class="a" style="left:404px;top:469px;width:1px;height:19px;background:#a0a0a0"></div>
<div class="a" style="left:479px;top:469px;width:1px;height:19px;background:#a0a0a0"></div>
<div class="a" style="left:549px;top:469px;width:1px;height:19px;background:#a0a0a0"></div>
<div class="a" style="left:621px;top:469px;width:1px;height:19px;background:#a0a0a0"></div>
<div class="a" style="left:698px;top:469px;width:1px;height:19px;background:#a0a0a0"></div>
<div class="a" style="left:757px;top:469px;width:1px;height:19px;background:#a0a0a0"></div>
<div class="a" style="left:897px;top:469px;width:1px;height:19px;background:#a0a0a0"></div>
<div class="a" style="left:986px;top:469px;width:1px;height:19px;background:#a0a0a0"></div>
<div class="t" style="left:-286px;top:470px;width:400px;text-align:right;">81585</div>
<div class="t" style="left:-250px;top:470px;width:400px;text-align:right;">7</div>
<div class="t" style="left:155px;top:470px;">EPA32005</div>
<div class="a" style="left:21px;top:488px;width:15px;height:19px;background:#c8c8c8"></div>
<div class="a" style="left:36px;top:488px;width:1px;height:19px;background:#a0a0a0"></div>
<div class="a" style="left:37px;top:488px;width:15px;height:19px;background:#c8c8c8"></div>
<div class="a" style="left:52px;top:488px;width:1px;height:19px;background:#a0a0a0"></div>
<div class="a" style="left:53px;top:488px;width:1073px;height:18px;background:#f0f0f0"></div>
<div class="a" style="left:37px;top:506px;width:1089px;height:1px;background:#a0a0a0"></div>
<div class="a" style="left:64px;top:488px;width:1px;height:19px;background:#a0a0a0"></div>
<div class="a" style="left:74px;top:488px;width:1px;height:19px;background:#a0a0a0"></div>
<div class="a" style="left:116px;top:488px;width:1px;height:19px;background:#a0a0a0"></div>
<div class="a" style="left:152px;top:488px;width:1px;height:19px;background:#a0a0a0"></div>
<div class="a" style="left:245px;top:488px;width:1px;height:19px;background:#a0a0a0"></div>
<div class="a" style="left:404px;top:488px;width:1px;height:19px;background:#a0a0a0"></div>
<div class="a" style="left:479px;top:488px;width:1px;height:19px;background:#a0a0a0"></div>
<div class="a" style="left:549px;top:488px;width:1px;height:19px;background:#a0a0a0"></div>
<div class="a" style="left:621px;top:488px;width:1px;height:19px;background:#a0a0a0"></div>
<div class="a" style="left:698px;top:488px;width:1px;height:19px;background:#a0a0a0"></div>
<div class="a" style="left:757px;top:488px;width:1px;height:19px;background:#a0a0a0"></div>
<div class="a" style="left:897px;top:488px;width:1px;height:19px;background:#a0a0a0"></div>
<div class="a" style="left:986px;top:488px;width:1px;height:19px;background:#a0a0a0"></div>
<div class="t" style="left:-286px;top:489px;width:400px;text-align:right;">81585</div>
<div class="t" style="left:-250px;top:489px;width:400px;text-align:right;">7</div>
<div class="t" style="left:155px;top:489px;">EHD1492R3</div>
<div class="a" style="left:21px;top:507px;width:15px;height:19px;background:#c8c8c8"></div>
<div class="a" style="left:36px;top:507px;width:1px;height:19px;background:#a0a0a0"></div>
<div class="a" style="left:37px;top:507px;width:15px;height:19px;background:#c8c8c8"></div>
<div class="a" style="left:52px;top:507px;width:1px;height:19px;background:#a0a0a0"></div>
<div class="a" style="left:53px;top:507px;width:1073px;height:18px;background:#fff"></div>
<div class="a" style="left:37px;top:525px;width:1089px;height:1px;background:#a0a0a0"></div>
<div class="a" style="left:64px;top:507px;width:1px;height:19px;background:#a0a0a0"></div>
<div class="a" style="left:74px;top:507px;width:1px;height:19px;background:#a0a0a0"></div>
<div class="a" style="left:116px;top:507px;width:1px;height:19px;background:#a0a0a0"></div>
<div class="a" style="left:152px;top:507px;width:1px;height:19px;background:#a0a0a0"></div>
<div class="a" style="left:245px;top:507px;width:1px;height:19px;background:#a0a0a0"></div>
<div class="a" style="left:404px;top:507px;width:1px;height:19px;background:#a0a0a0"></div>
<div class="a" style="left:479px;top:507px;width:1px;height:19px;background:#a0a0a0"></div>
<div class="a" style="left:549px;top:507px;width:1px;height:19px;background:#a0a0a0"></div>
<div class="a" style="left:621px;top:507px;width:1px;height:19px;background:#a0a0a0"></div>
<div class="a" style="left:698px;top:507px;width:1px;height:19px;background:#a0a0a0"></div>
<div class="a" style="left:757px;top:507px;width:1px;height:19px;background:#a0a0a0"></div>
<div class="a" style="left:897px;top:507px;width:1px;height:19px;background:#a0a0a0"></div>
<div class="a" style="left:986px;top:507px;width:1px;height:19px;background:#a0a0a0"></div>
<div class="t" style="left:-286px;top:508px;width:400px;text-align:right;">81585</div>
<div class="t" style="left:-250px;top:508px;width:400px;text-align:right;">6</div>
<div class="t" style="left:155px;top:508px;">SW3dPS-120m...</div>
<div class="a" style="left:21px;top:526px;width:15px;height:19px;background:#c8c8c8"></div>
<div class="a" style="left:36px;top:526px;width:1px;height:19px;background:#a0a0a0"></div>
<div class="a" style="left:37px;top:526px;width:1089px;height:18px;background:#d0d0d0"></div>
<div class="a" style="left:37px;top:544px;width:1089px;height:1px;background:#a8a8a8"></div>
<div class="a" style="left:39px;top:529px;width:11px;height:11px;background:#d2d2d2;border-left:1px solid #fff;border-top:1px solid #fff;border-right:1px solid #a4a4a4;border-bottom:1px solid #a4a4a4"></div>
<svg class="a" style="left:39px;top:529px;" width="11" height="11" viewBox="0 0 11 11"><path d="M2.8 5.7 H8.2 M5.5 3 V8.4" stroke="#000" stroke-width="1.5"/></svg>
<div class="t" style="left:53px;top:527px;">Aberfoyle Metal Treaters</div>
<div class="a" style="left:21px;top:545px;width:15px;height:19px;background:#c8c8c8"></div>
<div class="a" style="left:36px;top:545px;width:1px;height:19px;background:#a0a0a0"></div>
<div class="a" style="left:37px;top:545px;width:1089px;height:18px;background:#d0d0d0"></div>
<div class="a" style="left:37px;top:563px;width:1089px;height:1px;background:#a8a8a8"></div>
<div class="a" style="left:39px;top:548px;width:11px;height:11px;background:#d2d2d2;border-left:1px solid #fff;border-top:1px solid #fff;border-right:1px solid #a4a4a4;border-bottom:1px solid #a4a4a4"></div>
<svg class="a" style="left:39px;top:548px;" width="11" height="11" viewBox="0 0 11 11"><path d="M2.8 5.7 H8.2 M5.5 3 V8.4" stroke="#000" stroke-width="1.5"/></svg>
<div class="t" style="left:53px;top:546px;">ACCUCUT PROFILE &amp; GRINDING</div>
<div class="a" style="left:21px;top:564px;width:15px;height:19px;background:#c8c8c8"></div>
<div class="a" style="left:36px;top:564px;width:1px;height:19px;background:#a0a0a0"></div>
<div class="a" style="left:37px;top:564px;width:1089px;height:18px;background:#d0d0d0"></div>
<div class="a" style="left:37px;top:582px;width:1089px;height:1px;background:#a8a8a8"></div>
<div class="a" style="left:39px;top:567px;width:11px;height:11px;background:#d2d2d2;border-left:1px solid #fff;border-top:1px solid #fff;border-right:1px solid #a4a4a4;border-bottom:1px solid #a4a4a4"></div>
<svg class="a" style="left:39px;top:567px;" width="11" height="11" viewBox="0 0 11 11"><path d="M2.8 5.7 H8.2 M5.5 3 V8.4" stroke="#000" stroke-width="1.5"/></svg>
<div class="t" style="left:53px;top:565px;">Ace Sandblast</div>
<div class="a" style="left:21px;top:583px;width:15px;height:19px;background:#c8c8c8"></div>
<div class="a" style="left:36px;top:583px;width:1px;height:19px;background:#a0a0a0"></div>
<div class="a" style="left:37px;top:583px;width:1089px;height:18px;background:#d0d0d0"></div>
<div class="a" style="left:37px;top:601px;width:1089px;height:1px;background:#a8a8a8"></div>
<div class="a" style="left:39px;top:586px;width:11px;height:11px;background:#d2d2d2;border-left:1px solid #fff;border-top:1px solid #fff;border-right:1px solid #a4a4a4;border-bottom:1px solid #a4a4a4"></div>
<svg class="a" style="left:39px;top:586px;" width="11" height="11" viewBox="0 0 11 11"><path d="M2.8 5.7 H8.2" stroke="#000" stroke-width="1.5"/></svg>
<div class="t" style="left:53px;top:584px;">Acme ElectricC (Port Hope) Ltd.</div>
<div class="a" style="left:21px;top:602px;width:15px;height:19px;background:#c8c8c8"></div>
<div class="a" style="left:36px;top:602px;width:1px;height:19px;background:#a0a0a0"></div>
<div class="a" style="left:37px;top:602px;width:15px;height:19px;background:#c8c8c8"></div>
<div class="a" style="left:52px;top:602px;width:1px;height:19px;background:#a0a0a0"></div>
<div class="a" style="left:53px;top:602px;width:1073px;height:18px;background:#fff"></div>
<div class="a" style="left:37px;top:620px;width:1089px;height:1px;background:#a0a0a0"></div>
<div class="a" style="left:64px;top:602px;width:1px;height:19px;background:#a0a0a0"></div>
<div class="a" style="left:74px;top:602px;width:1px;height:19px;background:#a0a0a0"></div>
<div class="a" style="left:116px;top:602px;width:1px;height:19px;background:#a0a0a0"></div>
<div class="a" style="left:152px;top:602px;width:1px;height:19px;background:#a0a0a0"></div>
<div class="a" style="left:245px;top:602px;width:1px;height:19px;background:#a0a0a0"></div>
<div class="a" style="left:404px;top:602px;width:1px;height:19px;background:#a0a0a0"></div>
<div class="a" style="left:479px;top:602px;width:1px;height:19px;background:#a0a0a0"></div>
<div class="a" style="left:549px;top:602px;width:1px;height:19px;background:#a0a0a0"></div>
<div class="a" style="left:621px;top:602px;width:1px;height:19px;background:#a0a0a0"></div>
<div class="a" style="left:698px;top:602px;width:1px;height:19px;background:#a0a0a0"></div>
<div class="a" style="left:757px;top:602px;width:1px;height:19px;background:#a0a0a0"></div>
<div class="a" style="left:897px;top:602px;width:1px;height:19px;background:#a0a0a0"></div>
<div class="a" style="left:986px;top:602px;width:1px;height:19px;background:#a0a0a0"></div>
<div class="t" style="left:-286px;top:603px;width:400px;text-align:right;">81585</div>
<div class="t" style="left:-250px;top:603px;width:400px;text-align:right;">7</div>
<div class="t" style="left:155px;top:603px;">EPG31103</div>
<div class="a" style="left:21px;top:621px;width:15px;height:19px;background:#c8c8c8"></div>
<div class="a" style="left:36px;top:621px;width:1px;height:19px;background:#a0a0a0"></div>
<div class="a" style="left:37px;top:621px;width:15px;height:19px;background:#c8c8c8"></div>
<div class="a" style="left:52px;top:621px;width:1px;height:19px;background:#a0a0a0"></div>
<div class="a" style="left:53px;top:621px;width:1073px;height:18px;background:#f0f0f0"></div>
<div class="a" style="left:37px;top:639px;width:1089px;height:1px;background:#a0a0a0"></div>
<div class="a" style="left:64px;top:621px;width:1px;height:19px;background:#a0a0a0"></div>
<div class="a" style="left:74px;top:621px;width:1px;height:19px;background:#a0a0a0"></div>
<div class="a" style="left:116px;top:621px;width:1px;height:19px;background:#a0a0a0"></div>
<div class="a" style="left:152px;top:621px;width:1px;height:19px;background:#a0a0a0"></div>
<div class="a" style="left:245px;top:621px;width:1px;height:19px;background:#a0a0a0"></div>
<div class="a" style="left:404px;top:621px;width:1px;height:19px;background:#a0a0a0"></div>
<div class="a" style="left:479px;top:621px;width:1px;height:19px;background:#a0a0a0"></div>
<div class="a" style="left:549px;top:621px;width:1px;height:19px;background:#a0a0a0"></div>
<div class="a" style="left:621px;top:621px;width:1px;height:19px;background:#a0a0a0"></div>
<div class="a" style="left:698px;top:621px;width:1px;height:19px;background:#a0a0a0"></div>
<div class="a" style="left:757px;top:621px;width:1px;height:19px;background:#a0a0a0"></div>
<div class="a" style="left:897px;top:621px;width:1px;height:19px;background:#a0a0a0"></div>
<div class="a" style="left:986px;top:621px;width:1px;height:19px;background:#a0a0a0"></div>
<div class="t" style="left:-286px;top:622px;width:400px;text-align:right;">81585</div>
<div class="t" style="left:-250px;top:622px;width:400px;text-align:right;">7</div>
<div class="t" style="left:155px;top:622px;">EPGHBL4715C</div>
<div class="a" style="left:21px;top:640px;width:15px;height:19px;background:#c8c8c8"></div>
<div class="a" style="left:36px;top:640px;width:1px;height:19px;background:#a0a0a0"></div>
<div class="a" style="left:37px;top:640px;width:15px;height:19px;background:#c8c8c8"></div>
<div class="a" style="left:52px;top:640px;width:1px;height:19px;background:#a0a0a0"></div>
<div class="a" style="left:53px;top:640px;width:1073px;height:18px;background:#fff"></div>
<div class="a" style="left:37px;top:658px;width:1089px;height:1px;background:#a0a0a0"></div>
<div class="a" style="left:64px;top:640px;width:1px;height:19px;background:#a0a0a0"></div>
<div class="a" style="left:74px;top:640px;width:1px;height:19px;background:#a0a0a0"></div>
<div class="a" style="left:116px;top:640px;width:1px;height:19px;background:#a0a0a0"></div>
<div class="a" style="left:152px;top:640px;width:1px;height:19px;background:#a0a0a0"></div>
<div class="a" style="left:245px;top:640px;width:1px;height:19px;background:#a0a0a0"></div>
<div class="a" style="left:404px;top:640px;width:1px;height:19px;background:#a0a0a0"></div>
<div class="a" style="left:479px;top:640px;width:1px;height:19px;background:#a0a0a0"></div>
<div class="a" style="left:549px;top:640px;width:1px;height:19px;background:#a0a0a0"></div>
<div class="a" style="left:621px;top:640px;width:1px;height:19px;background:#a0a0a0"></div>
<div class="a" style="left:698px;top:640px;width:1px;height:19px;background:#a0a0a0"></div>
<div class="a" style="left:757px;top:640px;width:1px;height:19px;background:#a0a0a0"></div>
<div class="a" style="left:897px;top:640px;width:1px;height:19px;background:#a0a0a0"></div>
<div class="a" style="left:986px;top:640px;width:1px;height:19px;background:#a0a0a0"></div>
<div class="t" style="left:-286px;top:641px;width:400px;text-align:right;">81585</div>
<div class="t" style="left:-250px;top:641px;width:400px;text-align:right;">7</div>
<div class="t" style="left:155px;top:641px;">EPGDX2</div>
<div class="a" style="left:21px;top:659px;width:15px;height:19px;background:#c8c8c8"></div>
<div class="a" style="left:36px;top:659px;width:1px;height:19px;background:#a0a0a0"></div>
<div class="a" style="left:37px;top:659px;width:1089px;height:18px;background:#d0d0d0"></div>
<div class="a" style="left:37px;top:677px;width:1089px;height:1px;background:#a8a8a8"></div>
<div class="a" style="left:39px;top:662px;width:11px;height:11px;background:#d2d2d2;border-left:1px solid #fff;border-top:1px solid #fff;border-right:1px solid #a4a4a4;border-bottom:1px solid #a4a4a4"></div>
<svg class="a" style="left:39px;top:662px;" width="11" height="11" viewBox="0 0 11 11"><path d="M2.8 5.7 H8.2 M5.5 3 V8.4" stroke="#000" stroke-width="1.5"/></svg>
<div class="t" style="left:53px;top:660px;">Autoquip Corporation</div>
<div class="a" style="left:21px;top:678px;width:15px;height:19px;background:#c8c8c8"></div>
<div class="a" style="left:36px;top:678px;width:1px;height:19px;background:#a0a0a0"></div>
<div class="a" style="left:37px;top:678px;width:1089px;height:18px;background:#e2e2e2"></div>
<div class="a" style="left:37px;top:696px;width:1089px;height:1px;background:#a8a8a8"></div>
<div class="a" style="left:39px;top:681px;width:11px;height:11px;background:#d2d2d2;border-left:1px solid #fff;border-top:1px solid #fff;border-right:1px solid #a4a4a4;border-bottom:1px solid #a4a4a4"></div>
<svg class="a" style="left:39px;top:681px;" width="11" height="11" viewBox="0 0 11 11"><path d="M2.8 5.7 H8.2" stroke="#000" stroke-width="1.5"/></svg>
<div class="t" style="left:53px;top:679px;font-size:11px">GERRIE ELECTRIC WHOLESALE</div>
<div class="a" style="left:21px;top:697px;width:15px;height:19px;background:#c8c8c8"></div>
<div class="a" style="left:36px;top:697px;width:1px;height:19px;background:#a0a0a0"></div>
<div class="a" style="left:37px;top:697px;width:15px;height:19px;background:#c8c8c8"></div>
<div class="a" style="left:52px;top:697px;width:1px;height:19px;background:#a0a0a0"></div>
<div class="a" style="left:53px;top:697px;width:1073px;height:18px;background:#fff"></div>
<div class="a" style="left:37px;top:715px;width:1089px;height:1px;background:#a0a0a0"></div>
<div class="a" style="left:64px;top:697px;width:1px;height:19px;background:#a0a0a0"></div>
<div class="a" style="left:74px;top:697px;width:1px;height:19px;background:#a0a0a0"></div>
<div class="a" style="left:116px;top:697px;width:1px;height:19px;background:#a0a0a0"></div>
<div class="a" style="left:152px;top:697px;width:1px;height:19px;background:#a0a0a0"></div>
<div class="a" style="left:245px;top:697px;width:1px;height:19px;background:#a0a0a0"></div>
<div class="a" style="left:404px;top:697px;width:1px;height:19px;background:#a0a0a0"></div>
<div class="a" style="left:479px;top:697px;width:1px;height:19px;background:#a0a0a0"></div>
<div class="a" style="left:549px;top:697px;width:1px;height:19px;background:#a0a0a0"></div>
<div class="a" style="left:621px;top:697px;width:1px;height:19px;background:#a0a0a0"></div>
<div class="a" style="left:698px;top:697px;width:1px;height:19px;background:#a0a0a0"></div>
<div class="a" style="left:757px;top:697px;width:1px;height:19px;background:#a0a0a0"></div>
<div class="a" style="left:897px;top:697px;width:1px;height:19px;background:#a0a0a0"></div>
<div class="a" style="left:986px;top:697px;width:1px;height:19px;background:#a0a0a0"></div>
<div class="t" style="left:-286px;top:698px;width:400px;text-align:right;">84155</div>
<div class="t" style="left:-250px;top:698px;width:400px;text-align:right;">1</div>
<div class="t" style="left:155px;top:698px;">81585-1-E01</div>
<div class="a" style="left:21px;top:716px;width:15px;height:19px;background:#c8c8c8"></div>
<div class="a" style="left:36px;top:716px;width:1px;height:19px;background:#a0a0a0"></div>
<div class="a" style="left:37px;top:716px;width:15px;height:19px;background:#c8c8c8"></div>
<div class="a" style="left:52px;top:716px;width:1px;height:19px;background:#a0a0a0"></div>
<div class="a" style="left:53px;top:716px;width:1073px;height:18px;background:#f0f0f0"></div>
<div class="a" style="left:37px;top:734px;width:1089px;height:1px;background:#a0a0a0"></div>
<div class="a" style="left:64px;top:716px;width:1px;height:19px;background:#a0a0a0"></div>
<div class="a" style="left:74px;top:716px;width:1px;height:19px;background:#a0a0a0"></div>
<div class="a" style="left:116px;top:716px;width:1px;height:19px;background:#a0a0a0"></div>
<div class="a" style="left:152px;top:716px;width:1px;height:19px;background:#a0a0a0"></div>
<div class="a" style="left:245px;top:716px;width:1px;height:19px;background:#a0a0a0"></div>
<div class="a" style="left:404px;top:716px;width:1px;height:19px;background:#a0a0a0"></div>
<div class="a" style="left:479px;top:716px;width:1px;height:19px;background:#a0a0a0"></div>
<div class="a" style="left:549px;top:716px;width:1px;height:19px;background:#a0a0a0"></div>
<div class="a" style="left:621px;top:716px;width:1px;height:19px;background:#a0a0a0"></div>
<div class="a" style="left:698px;top:716px;width:1px;height:19px;background:#a0a0a0"></div>
<div class="a" style="left:757px;top:716px;width:1px;height:19px;background:#a0a0a0"></div>
<div class="a" style="left:897px;top:716px;width:1px;height:19px;background:#a0a0a0"></div>
<div class="a" style="left:986px;top:716px;width:1px;height:19px;background:#a0a0a0"></div>
<div class="t" style="left:-286px;top:717px;width:400px;text-align:right;">84155</div>
<div class="t" style="left:-250px;top:717px;width:400px;text-align:right;">1</div>
<div class="t" style="left:155px;top:717px;">81585-1-E04</div>
<div class="a" style="left:21px;top:735px;width:15px;height:19px;background:#c8c8c8"></div>
<div class="a" style="left:36px;top:735px;width:1px;height:19px;background:#a0a0a0"></div>
<div class="a" style="left:37px;top:735px;width:15px;height:19px;background:#c8c8c8"></div>
<div class="a" style="left:52px;top:735px;width:1px;height:19px;background:#a0a0a0"></div>
<div class="a" style="left:53px;top:735px;width:1073px;height:18px;background:#fff"></div>
<div class="a" style="left:37px;top:753px;width:1089px;height:1px;background:#a0a0a0"></div>
<div class="a" style="left:64px;top:735px;width:1px;height:19px;background:#a0a0a0"></div>
<div class="a" style="left:74px;top:735px;width:1px;height:19px;background:#a0a0a0"></div>
<div class="a" style="left:116px;top:735px;width:1px;height:19px;background:#a0a0a0"></div>
<div class="a" style="left:152px;top:735px;width:1px;height:19px;background:#a0a0a0"></div>
<div class="a" style="left:245px;top:735px;width:1px;height:19px;background:#a0a0a0"></div>
<div class="a" style="left:404px;top:735px;width:1px;height:19px;background:#a0a0a0"></div>
<div class="a" style="left:479px;top:735px;width:1px;height:19px;background:#a0a0a0"></div>
<div class="a" style="left:549px;top:735px;width:1px;height:19px;background:#a0a0a0"></div>
<div class="a" style="left:621px;top:735px;width:1px;height:19px;background:#a0a0a0"></div>
<div class="a" style="left:698px;top:735px;width:1px;height:19px;background:#a0a0a0"></div>
<div class="a" style="left:757px;top:735px;width:1px;height:19px;background:#a0a0a0"></div>
<div class="a" style="left:897px;top:735px;width:1px;height:19px;background:#a0a0a0"></div>
<div class="a" style="left:986px;top:735px;width:1px;height:19px;background:#a0a0a0"></div>
<div class="t" style="left:-286px;top:736px;width:400px;text-align:right;">84155</div>
<div class="t" style="left:-250px;top:736px;width:400px;text-align:right;">1</div>
<div class="t" style="left:155px;top:736px;">81585-1-E10</div>
<div class="a" style="left:21px;top:753px;width:1124px;height:18px;background:#f0f0f0;border-top:1px solid #d8d8d8"></div>
<div class="t" style="left:25px;top:754px;">Record:</div>
<div class="a" style="left:70px;top:754px;width:17px;height:16px;background:linear-gradient(#fbfbfb,#ececec);border-right:1px solid #9a9a9a;border-bottom:2px solid #9a9a9a"></div>
<svg class="a" style="left:70px;top:754px;" width="17" height="16" viewBox="0 0 17 16"><rect x="3" y="3" width="2" height="9" fill="#000"/><path d="M13 3 L7.5 7.5 L13 12Z" fill="#000"/></svg>
<div class="a" style="left:87px;top:754px;width:18px;height:16px;background:linear-gradient(#fbfbfb,#ececec);border-right:1px solid #9a9a9a;border-bottom:2px solid #9a9a9a"></div>
<svg class="a" style="left:87px;top:754px;" width="18" height="16" viewBox="0 0 18 16"><path d="M13 3 L7 7.5 L13 12Z" fill="#000"/></svg>
<div class="a" style="left:109px;top:754px;width:44px;height:16px;background:#fff;border-top:2px solid #7a7a7a;border-left:2px solid #7a7a7a"></div>
<div class="t" style="left:159px;top:754px;">of 800</div>
<div class="a" style="left:199px;top:754px;width:17px;height:16px;background:linear-gradient(#fbfbfb,#ececec);border-right:1px solid #9a9a9a;border-bottom:2px solid #9a9a9a"></div>
<svg class="a" style="left:199px;top:754px;" width="17" height="16" viewBox="0 0 17 16"><path d="M5 3 L11 7.5 L5 12Z" fill="#000"/></svg>
<div class="a" style="left:217px;top:754px;width:18px;height:16px;background:linear-gradient(#fbfbfb,#ececec);border-right:1px solid #9a9a9a;border-bottom:2px solid #9a9a9a"></div>
<svg class="a" style="left:217px;top:754px;" width="18" height="16" viewBox="0 0 18 16"><path d="M4 3 L9.5 7.5 L4 12Z" fill="#000"/><rect x="11" y="3" width="2" height="9" fill="#000"/></svg>
<div class="a" style="left:1150px;top:234px;width:1px;height:546px;background:#e3e3e3"></div>
<div class="a" style="left:1126px;top:239px;width:18px;height:531px;background:#f0f0f0;border-left:1px solid #a0a0a0"></div>
<div class="a" style="left:1127px;top:277px;width:16px;height:400px;background:#cdcdcd"></div>
<svg class="a" style="left:1131px;top:245px;" width="9" height="6" viewBox="0 0 9 6"><path d="M0.9 5 L4.3 1.4 L7.7 5" fill="none" stroke="#404040" stroke-width="2.2"/></svg>
<div class="a" style="left:244px;top:299px;width:1000px;height:572px;background:linear-gradient(#c2d4eb,#bdd0e8 40%,#b9cce6);border:1px solid #8497b3;border-radius:6px 6px 0 0"></div>
<svg class="a" style="left:259px;top:311px;" width="12" height="13" viewBox="0 0 12 13"><path d="M6 0.5 L11.5 3.5 L11.5 9.5 L6 12.5 L0.5 9.5 L0.5 3.5Z" fill="#e0452a"/><path d="M6 6.5 L11.5 3.5 L11.5 9.5 L6 12.5Z" fill="#f08a28"/><path d="M6 0.5 L11.5 3.5 L6 6.5 L0.5 3.5Z" fill="#ef5a3a"/></svg>
<div class="t" style="left:277px;top:311px;color:#1e2e48">PO # 300385</div>
<div class="a" style="left:1138px;top:318px;width:11px;height:5px;border:1.5px solid #4a5668;border-radius:1px"></div>
<div class="a" style="left:1174px;top:314px;width:11px;height:9px;border:1.5px solid #4a5668;border-radius:1px"></div>
<div class="a" style="left:1177px;top:317px;width:5px;height:3px;border:1px solid #4a5668"></div>
<svg class="a" style="left:1209px;top:314px;" width="12" height="10" viewBox="0 0 12 10"><path d="M0.7 2.1 L3.1 0.7 L5.8 2.9 L8.5 0.7 L10.9 2.1 L8.3 4.8 L10.9 7.5 L8.5 8.9 L5.8 6.7 L3.1 8.9 L0.7 7.5 L3.3 4.8Z" fill="#fbfcfe" stroke="#4a5668" stroke-width="1.3" stroke-linejoin="round"/></svg>
<div class="a" style="left:253px;top:331px;width:964px;height:43px;background:#6992cf"></div>
<div class="t" style="left:254px;top:337px;color:#fff;font-size:23.2px;line-height:30px">PO # 300385</div>
<div class="a" style="left:253px;top:374px;width:964px;height:471px;background:#fff"></div>
<div class="a" style="left:1217px;top:331px;width:18px;height:514px;background:#f4f4f4"></div>
<div class="a" style="left:1218px;top:332px;width:16px;height:17px;background:linear-gradient(#fafafa,#e6e6e6);border:1px solid #cfcfcf"></div>
<svg class="a" style="left:1221px;top:337px;" width="10" height="6" viewBox="0 0 10 6"><path d="M5 0.5 L9.5 5.5 L0.5 5.5Z" fill="#4a5672"/></svg>
<div class="a" style="left:1219px;top:350px;width:14px;height:430px;background:linear-gradient(90deg,#e6e6e6,#f8f8f8 50%,#e6e6e6);border:1px solid #c8c8c8;border-radius:1px"></div>
<div class="a" style="left:1222px;top:561px;width:8px;height:1px;background:#8a8a8a"></div>
<div class="a" style="left:1222px;top:563px;width:8px;height:1px;background:#8a8a8a"></div>
<div class="a" style="left:1222px;top:565px;width:8px;height:1px;background:#8a8a8a"></div>
<div class="a" style="left:1218px;top:827px;width:16px;height:17px;background:linear-gradient(#fafafa,#e6e6e6);border:1px solid #cfcfcf"></div>
<svg class="a" style="left:1221px;top:833px;" width="10" height="6" viewBox="0 0 10 6"><path d="M0.5 0.5 L9.5 0.5 L5 5.5Z" fill="#4a5672"/></svg>
<div class="a" style="left:253px;top:845px;width:982px;height:16px;background:#f6f6f6;border-top:1px solid #b8b8b8"></div>
<div class="a" style="left:254px;top:846px;width:16px;height:14px;background:linear-gradient(#fafafa,#e6e6e6);border:1px solid #cfcfcf"></div>
<svg class="a" style="left:258px;top:848px;" width="6" height="10" viewBox="0 0 6 10"><path d="M5.5 0.5 L5.5 9.5 L0.5 5Z" fill="#4a5672"/></svg>
<div class="a" style="left:271px;top:846px;width:927px;height:14px;background:linear-gradient(#f4f4f4,#e9e9e9);border-bottom:1px solid #c4c4c4;border-right:1px solid #d0d0d0"></div>
<div class="a" style="left:732px;top:849px;width:1px;height:7px;background:#8a8a8a"></div>
<div class="a" style="left:734px;top:849px;width:1px;height:7px;background:#8a8a8a"></div>
<div class="a" style="left:736px;top:849px;width:1px;height:7px;background:#8a8a8a"></div>
<div class="a" style="left:1200px;top:846px;width:16px;height:14px;background:linear-gradient(#fafafa,#e6e6e6);border:1px solid #cfcfcf"></div>
<svg class="a" style="left:1205px;top:848px;" width="6" height="10" viewBox="0 0 6 10"><path d="M0.5 0.5 L0.5 9.5 L5.5 5Z" fill="#4a5672"/></svg>
<div class="a" style="left:253px;top:861px;width:982px;height:1px;background:#8fa2bd"></div>
<div class="a" style="left:256px;top:396px;width:960px;height:449px;border:1px solid #e3e3e3;border-bottom:none;border-right-color:#d8d8d8"></div>
<div class="a" style="left:256px;top:375px;width:51px;height:23px;background:#fff;border-left:1px solid #e3e3e3"></div>
<div class="a" style="left:307px;top:376px;width:107px;height:21px;background:#efefef;border:1px solid #dadada;border-bottom:none"></div>
<div class="t" style="left:268px;top:378px;"><u>D</u>etails</div>
<div class="t" style="left:314px;top:379px;"><u>C</u>ustom Properties</div>
<div class="t" style="left:269px;top:403px;color:#111">Revision:</div>
<div class="t" style="left:269px;top:425px;color:#111">Supplier:</div>
<div class="t" style="left:269px;top:447px;color:#111">Ship To:</div>
<div class="t" style="left:269px;top:469px;color:#111">Date:</div>
<div class="t" style="left:269px;top:491px;color:#111">Required:</div>
<div class="t" style="left:269px;top:513px;color:#111">Revised:</div>
<div class="a" style="left:370px;top:404px;width:184px;height:18px;background:#fff;border:1px solid #a9a9a9"></div>
<div class="a" style="left:370px;top:425px;width:184px;height:19px;background:#fff;border:1px solid #a9a9a9;box-shadow:inset 1px 1px 0 #e2e2e2"></div>
<div class="t" style="left:372px;top:426px;">Acme ElectricC (Port Hope) Ltc</div>
<div class="a" style="left:536px;top:426px;width:17px;height:17px;background:#e1e1e1;border:1px solid #ececec"></div>
<svg class="a" style="left:541px;top:433px;" width="9" height="5" viewBox="0 0 9 5"><path d="M0.5 0.5 L4 4 L7.5 0.5" fill="none" stroke="#444" stroke-width="1"/></svg>
<div class="a" style="left:370px;top:447px;width:184px;height:19px;background:#fff;border:1px solid #a9a9a9;box-shadow:inset 1px 1px 0 #e2e2e2"></div>
<div class="t" style="left:372px;top:448px;">Acme Design Company Ltd [Ar</div>
<div class="a" style="left:536px;top:448px;width:17px;height:17px;background:#e1e1e1;border:1px solid #ececec"></div>
<svg class="a" style="left:541px;top:455px;" width="9" height="5" viewBox="0 0 9 5"><path d="M0.5 0.5 L4 4 L7.5 0.5" fill="none" stroke="#444" stroke-width="1"/></svg>
<div class="a" style="left:370px;top:470px;width:184px;height:18px;background:#fff;border:1px solid #a9a9a9"></div>
<div class="t" style="left:151px;top:470px;width:400px;text-align:right;">5/15/18</div>
<div class="a" style="left:370px;top:492px;width:184px;height:18px;background:#fff;border:1px solid #a9a9a9"></div>
<div class="t" style="left:151px;top:492px;width:400px;text-align:right;">6/26/18</div>
<div class="a" style="left:370px;top:514px;width:184px;height:18px;background:#fff;border:1px solid #a9a9a9"></div>
<div class="t" style="left:584px;top:403px;color:#111">Terms:</div>
<div class="t" style="left:584px;top:425px;color:#111">Ship Via:</div>
<div class="t" style="left:584px;top:447px;color:#111">Incoterm:</div>
<div class="t" style="left:584px;top:469px;color:#111">Incoterm Notes:</div>
<div class="t" style="left:584px;top:491px;color:#111">Port/Location:</div>
<div class="t" style="left:584px;top:513px;color:#111">Handling &amp;</div>
<div class="t" style="left:584px;top:527px;color:#111">Misc. Charges:</div>
<div class="a" style="left:684px;top:403px;width:184px;height:19px;background:#fff;border:1px solid #a9a9a9;box-shadow:inset 1px 1px 0 #e2e2e2"></div>
<div class="t" style="left:686px;top:404px;">Net 45</div>
<div class="a" style="left:850px;top:404px;width:17px;height:17px;background:#e1e1e1;border:1px solid #ececec"></div>
<svg class="a" style="left:855px;top:411px;" width="9" height="5" viewBox="0 0 9 5"><path d="M0.5 0.5 L4 4 L7.5 0.5" fill="none" stroke="#444" stroke-width="1"/></svg>
<div class="a" style="left:684px;top:425px;width:184px;height:19px;background:#fff;border:1px solid #a9a9a9;box-shadow:inset 1px 1px 0 #e2e2e2"></div>
<div class="t" style="left:686px;top:426px;">Empire Trucking</div>
<div class="a" style="left:850px;top:426px;width:17px;height:17px;background:#e1e1e1;border:1px solid #ececec"></div>
<svg class="a" style="left:855px;top:433px;" width="9" height="5" viewBox="0 0 9 5"><path d="M0.5 0.5 L4 4 L7.5 0.5" fill="none" stroke="#444" stroke-width="1"/></svg>
<div class="a" style="left:684px;top:447px;width:184px;height:19px;background:#fff;border:1px solid #a9a9a9;box-shadow:inset 1px 1px 0 #e2e2e2"></div>
<div class="t" style="left:686px;top:448px;">FOB</div>
<div class="a" style="left:850px;top:448px;width:17px;height:17px;background:#e1e1e1;border:1px solid #ececec"></div>
<svg class="a" style="left:855px;top:455px;" width="9" height="5" viewBox="0 0 9 5"><path d="M0.5 0.5 L4 4 L7.5 0.5" fill="none" stroke="#444" stroke-width="1"/></svg>
<div class="a" style="left:684px;top:470px;width:184px;height:18px;background:#fff;border:1px solid #a9a9a9"></div>
<div class="a" style="left:684px;top:492px;width:184px;height:18px;background:#fff;border:1px solid #a9a9a9"></div>
<div class="a" style="left:684px;top:514px;width:184px;height:18px;background:#fff;border:1px solid #a9a9a9"></div>
<div class="t" style="left:465px;top:514px;width:400px;text-align:right;">0.00</div>
<div class="t" style="left:898px;top:403px;color:#111">Printed:</div>
<div class="t" style="left:898px;top:425px;color:#111">Currency:</div>
<div class="t" style="left:898px;top:447px;color:#111">Currency&nbsp; Rate:</div>
<div class="t" style="left:898px;top:469px;color:#111">East Bayshore</div>
<div class="t" style="left:898px;top:491px;color:#111">Tax 2</div>
<div class="t" style="left:898px;top:513px;color:#111">Buyer:</div>
<div class="t" style="left:898px;top:535px;color:#111">Emailed:</div>
<div class="a" style="left:998px;top:403px;width:13px;height:13px;background:#fff;border:1px solid #333"></div>
<div class="a" style="left:998px;top:425px;width:184px;height:19px;background:#fff;border:1px solid #a9a9a9;box-shadow:inset 1px 1px 0 #e2e2e2"></div>
<div class="t" style="left:1000px;top:426px;">CA</div>
<div class="a" style="left:1164px;top:426px;width:17px;height:17px;background:#e1e1e1;border:1px solid #ececec"></div>
<svg class="a" style="left:1169px;top:433px;" width="9" height="5" viewBox="0 0 9 5"><path d="M0.5 0.5 L4 4 L7.5 0.5" fill="none" stroke="#444" stroke-width="1"/></svg>
<div class="a" style="left:998px;top:448px;width:184px;height:18px;background:#fff;border:1px solid #a9a9a9"></div>
<div class="t" style="left:779px;top:448px;width:400px;text-align:right;">1</div>
<div class="a" style="left:998px;top:470px;width:184px;height:18px;background:#fff;border:1px solid #a9a9a9"></div>
<div class="t" style="left:779px;top:470px;width:400px;text-align:right;">0.00%</div>
<div class="a" style="left:998px;top:492px;width:184px;height:18px;background:#fff;border:1px solid #a9a9a9"></div>
<div class="t" style="left:779px;top:492px;width:400px;text-align:right;">0.00%</div>
<div class="a" style="left:998px;top:513px;width:184px;height:19px;background:#fff;border:1px solid #a9a9a9;box-shadow:inset 1px 1px 0 #e2e2e2"></div>
<div class="t" style="left:1000px;top:514px;">Williamson, Steve</div>
<div class="a" style="left:1164px;top:514px;width:17px;height:17px;background:#e1e1e1;border:1px solid #ececec"></div>
<svg class="a" style="left:1169px;top:521px;" width="9" height="5" viewBox="0 0 9 5"><path d="M0.5 0.5 L4 4 L7.5 0.5" fill="none" stroke="#444" stroke-width="1"/></svg>
<div class="a" style="left:998px;top:536px;width:13px;height:13px;background:#fff;border:1px solid #333"></div>
<div class="t" style="left:269px;top:558px;color:#111">Top Notes</div>
<div class="t" style="left:584px;top:558px;color:#111">Bottom Notes</div>
<div class="t" style="left:898px;top:558px;color:#111">Special Notes</div>
<div class="a" style="left:268px;top:578px;width:307px;height:72px;background:#fff;border:1px solid #a9a9a9"></div>
<div class="t" style="left:270px;top:580px;">Please Ship in one Order</div>
<div class="a" style="left:557px;top:579px;width:17px;height:70px;background:#f0f0f0"></div>
<svg class="a" style="left:562px;top:585px;" width="8" height="6" viewBox="0 0 8 6"><path d="M0.8 5 L3.8 1.5 L6.8 5" fill="none" stroke="#404040" stroke-width="2"/></svg>
<div class="a" style="left:558px;top:597px;width:15px;height:16px;background:#cdcdcd"></div>
<svg class="a" style="left:562px;top:638px;" width="8" height="6" viewBox="0 0 8 6"><path d="M0.8 1 L3.8 4.5 L6.8 1" fill="none" stroke="#404040" stroke-width="2"/></svg>
<div class="a" style="left:583px;top:578px;width:307px;height:72px;background:#fff;border:1px solid #a9a9a9"></div>
<div class="a" style="left:897px;top:578px;width:307px;height:72px;background:#fff;border:1px solid #a9a9a9"></div>
<div class="a" style="left:268px;top:654px;width:2px;height:191px;background:#a0a0a0"></div>
<div class="a" style="left:268px;top:654px;width:935px;height:2px;background:#a0a0a0"></div>
<div class="a" style="left:1202px;top:654px;width:1px;height:191px;background:#a0a0a0"></div>
<div class="a" style="left:270px;top:656px;width:932px;height:20px;background:#cbcbcb;border-top:1px solid #fff"></div>
<div class="a" style="left:270px;top:656px;width:1px;height:20px;background:#fff"></div>
<div class="a" style="left:270px;top:676px;width:932px;height:1px;background:#a0a0a0"></div>
<div class="a" style="left:287px;top:656px;width:1px;height:20px;background:#a0a0a0"></div>
<div class="a" style="left:288px;top:656px;width:1px;height:20px;background:#fff"></div>
<div class="a" style="left:348px;top:656px;width:1px;height:20px;background:#a0a0a0"></div>
<div class="a" style="left:349px;top:656px;width:1px;height:20px;background:#fff"></div>
<div class="a" style="left:429px;top:656px;width:1px;height:20px;background:#a0a0a0"></div>
<div class="a" style="left:430px;top:656px;width:1px;height:20px;background:#fff"></div>
<div class="a" style="left:510px;top:656px;width:1px;height:20px;background:#a0a0a0"></div>
<div class="a" style="left:511px;top:656px;width:1px;height:20px;background:#fff"></div>
<div class="a" style="left:575px;top:656px;width:1px;height:20px;background:#a0a0a0"></div>
<div class="a" style="left:576px;top:656px;width:1px;height:20px;background:#fff"></div>
<div class="a" style="left:695px;top:656px;width:1px;height:20px;background:#a0a0a0"></div>
<div class="a" style="left:696px;top:656px;width:1px;height:20px;background:#fff"></div>
<div class="a" style="left:975px;top:656px;width:1px;height:20px;background:#a0a0a0"></div>
<div class="a" style="left:976px;top:656px;width:1px;height:20px;background:#fff"></div>
<div class="a" style="left:1056px;top:656px;width:1px;height:20px;background:#a0a0a0"></div>
<div class="a" style="left:1057px;top:656px;width:1px;height:20px;background:#fff"></div>
<div class="a" style="left:1121px;top:656px;width:1px;height:20px;background:#a0a0a0"></div>
<div class="a" style="left:1122px;top:656px;width:1px;height:20px;background:#fff"></div>
<div class="a" style="left:1201px;top:656px;width:1px;height:20px;background:#a0a0a0"></div>
<div class="a" style="left:1202px;top:656px;width:1px;height:20px;background:#fff"></div>
<div class="t" style="left:290px;top:658px;">Order No.</div>
<div class="t" style="left:351px;top:658px;">Project</div>
<div class="t" style="left:432px;top:658px;">Job</div>
<div class="t" style="left:513px;top:658px;">Int. Qty</div>
<div class="t" style="left:578px;top:658px;">PO Part No.</div>
<div class="t" style="left:698px;top:658px;">PO Part Description</div>
<div class="t" style="left:978px;top:658px;">Unit Price</div>
<div class="t" style="left:1059px;top:658px;">Ext. Price</div>
<div class="t" style="left:1124px;top:658px;">Required</div>
<div class="a" style="left:270px;top:677px;width:17px;height:18px;background:#c8c8c8;border-left:1px solid #fff;border-top:1px solid #fff"></div>
<div class="a" style="left:288px;top:677px;width:913px;height:18px;background:#fff"></div>
<div class="a" style="left:270px;top:695px;width:932px;height:1px;background:#a0a0a0"></div>
<div class="a" style="left:287px;top:677px;width:1px;height:19px;background:#a0a0a0"></div>
<div class="a" style="left:348px;top:677px;width:1px;height:19px;background:#a0a0a0"></div>
<div class="a" style="left:429px;top:677px;width:1px;height:19px;background:#a0a0a0"></div>
<div class="a" style="left:510px;top:677px;width:1px;height:19px;background:#a0a0a0"></div>
<div class="a" style="left:575px;top:677px;width:1px;height:19px;background:#a0a0a0"></div>
<div class="a" style="left:695px;top:677px;width:1px;height:19px;background:#a0a0a0"></div>
<div class="a" style="left:975px;top:677px;width:1px;height:19px;background:#a0a0a0"></div>
<div class="a" style="left:1056px;top:677px;width:1px;height:19px;background:#a0a0a0"></div>
<div class="a" style="left:1121px;top:677px;width:1px;height:19px;background:#a0a0a0"></div>
<div class="a" style="left:1201px;top:677px;width:1px;height:19px;background:#a0a0a0"></div>
<div class="t" style="left:27px;top:678px;width:400px;text-align:right;">81585</div>
<div class="t" style="left:108px;top:678px;width:400px;text-align:right;">7</div>
<div class="t" style="left:173px;top:678px;width:400px;text-align:right;">12</div>
<div class="t" style="left:577px;top:678px;">EPG1462G1</div>
<div class="t" style="left:697px;top:678px;font-size:11px">MOUNTING BRACKETS/CLAMPS FOR ANDERSON ...</div>
<div class="t" style="left:654px;top:678px;width:400px;text-align:right;">$2.03</div>
<div class="t" style="left:719px;top:678px;width:400px;text-align:right;">$24.36</div>
<div class="t" style="left:799px;top:678px;width:400px;text-align:right;">6/26/18</div>
<div class="a" style="left:270px;top:696px;width:17px;height:18px;background:#c8c8c8;border-left:1px solid #fff;border-top:1px solid #fff"></div>
<div class="a" style="left:288px;top:696px;width:913px;height:18px;background:#f0f0f0"></div>
<div class="a" style="left:270px;top:714px;width:932px;height:1px;background:#a0a0a0"></div>
<div class="a" style="left:287px;top:696px;width:1px;height:19px;background:#a0a0a0"></div>
<div class="a" style="left:348px;top:696px;width:1px;height:19px;background:#a0a0a0"></div>
<div class="a" style="left:429px;top:696px;width:1px;height:19px;background:#a0a0a0"></div>
<div class="a" style="left:510px;top:696px;width:1px;height:19px;background:#a0a0a0"></div>
<div class="a" style="left:575px;top:696px;width:1px;height:19px;background:#a0a0a0"></div>
<div class="a" style="left:695px;top:696px;width:1px;height:19px;background:#a0a0a0"></div>
<div class="a" style="left:975px;top:696px;width:1px;height:19px;background:#a0a0a0"></div>
<div class="a" style="left:1056px;top:696px;width:1px;height:19px;background:#a0a0a0"></div>
<div class="a" style="left:1121px;top:696px;width:1px;height:19px;background:#a0a0a0"></div>
<div class="a" style="left:1201px;top:696px;width:1px;height:19px;background:#a0a0a0"></div>
<div class="t" style="left:27px;top:697px;width:400px;text-align:right;">81585</div>
<div class="t" style="left:108px;top:697px;width:400px;text-align:right;">7</div>
<div class="t" style="left:173px;top:697px;width:400px;text-align:right;">24</div>
<div class="t" style="left:577px;top:697px;">EPG1R501F</div>
<div class="t" style="left:697px;top:697px;font-size:11px">RECEPTACLE 5 POLE **FEMALE** "MINI" BRAD HA...</div>
<div class="t" style="left:654px;top:697px;width:400px;text-align:right;">$19.31</div>
<div class="t" style="left:719px;top:697px;width:400px;text-align:right;">$463.44</div>
<div class="t" style="left:799px;top:697px;width:400px;text-align:right;">6/26/18</div>
<div class="a" style="left:270px;top:715px;width:17px;height:18px;background:#c8c8c8;border-left:1px solid #fff;border-top:1px solid #fff"></div>
<div class="a" style="left:288px;top:715px;width:913px;height:18px;background:#fff"></div>
<div class="a" style="left:270px;top:733px;width:932px;height:1px;background:#a0a0a0"></div>
<div class="a" style="left:287px;top:715px;width:1px;height:19px;background:#a0a0a0"></div>
<div class="a" style="left:348px;top:715px;width:1px;height:19px;background:#a0a0a0"></div>
<div class="a" style="left:429px;top:715px;width:1px;height:19px;background:#a0a0a0"></div>
<div class="a" style="left:510px;top:715px;width:1px;height:19px;background:#a0a0a0"></div>
<div class="a" style="left:575px;top:715px;width:1px;height:19px;background:#a0a0a0"></div>
<div class="a" style="left:695px;top:715px;width:1px;height:19px;background:#a0a0a0"></div>
<div class="a" style="left:975px;top:715px;width:1px;height:19px;background:#a0a0a0"></div>
<div class="a" style="left:1056px;top:715px;width:1px;height:19px;background:#a0a0a0"></div>
<div class="a" style="left:1121px;top:715px;width:1px;height:19px;background:#a0a0a0"></div>
<div class="a" style="left:1201px;top:715px;width:1px;height:19px;background:#a0a0a0"></div>
<div class="t" style="left:27px;top:716px;width:400px;text-align:right;">81585</div>
<div class="t" style="left:108px;top:716px;width:400px;text-align:right;">7</div>
<div class="t" style="left:173px;top:716px;width:400px;text-align:right;">48</div>
<div class="t" style="left:577px;top:716px;">EPG2610S</div>
<div class="t" style="left:697px;top:716px;font-size:11px">30 AMP-120V TWIST LOCK SURFACE MOUNT REC...</div>
<div class="t" style="left:654px;top:716px;width:400px;text-align:right;">$38.00</div>
<div class="t" style="left:719px;top:716px;width:400px;text-align:right;">$1,824.00</div>
<div class="t" style="left:799px;top:716px;width:400px;text-align:right;">6/26/18</div>
<div class="a" style="left:270px;top:734px;width:17px;height:18px;background:#c8c8c8;border-left:1px solid #fff;border-top:1px solid #fff"></div>
<div class="a" style="left:288px;top:734px;width:913px;height:18px;background:#f0f0f0"></div>
<div class="a" style="left:270px;top:752px;width:932px;height:1px;background:#a0a0a0"></div>
<div class="a" style="left:287px;top:734px;width:1px;height:19px;background:#a0a0a0"></div>
<div class="a" style="left:348px;top:734px;width:1px;height:19px;background:#a0a0a0"></div>
<div class="a" style="left:429px;top:734px;width:1px;height:19px;background:#a0a0a0"></div>
<div class="a" style="left:510px;top:734px;width:1px;height:19px;background:#a0a0a0"></div>
<div class="a" style="left:575px;top:734px;width:1px;height:19px;background:#a0a0a0"></div>
<div class="a" style="left:695px;top:734px;width:1px;height:19px;background:#a0a0a0"></div>
<div class="a" style="left:975px;top:734px;width:1px;height:19px;background:#a0a0a0"></div>
<div class="a" style="left:1056px;top:734px;width:1px;height:19px;background:#a0a0a0"></div>
<div class="a" style="left:1121px;top:734px;width:1px;height:19px;background:#a0a0a0"></div>
<div class="a" style="left:1201px;top:734px;width:1px;height:19px;background:#a0a0a0"></div>
<div class="t" style="left:27px;top:735px;width:400px;text-align:right;">81585</div>
<div class="t" style="left:108px;top:735px;width:400px;text-align:right;">1</div>
<div class="t" style="left:173px;top:735px;width:400px;text-align:right;">8</div>
<div class="t" style="left:577px;top:735px;">EPG31103</div>
<div class="t" style="left:697px;top:735px;font-size:11px">FEMALE PLUG&nbsp; CONNECTOR BODY 125V 15A HUB...</div>
<div class="t" style="left:654px;top:735px;width:400px;text-align:right;">$12.08</div>
<div class="t" style="left:719px;top:735px;width:400px;text-align:right;">$96.64</div>
<div class="t" style="left:799px;top:735px;width:400px;text-align:right;">6/26/18</div>
<div class="a" style="left:270px;top:753px;width:17px;height:18px;background:#c8c8c8;border-left:1px solid #fff;border-top:1px solid #fff"></div>
<div class="a" style="left:288px;top:753px;width:913px;height:18px;background:#fff"></div>
<div class="a" style="left:270px;top:771px;width:932px;height:1px;background:#a0a0a0"></div>
<div class="a" style="left:287px;top:753px;width:1px;height:19px;background:#a0a0a0"></div>
<div class="a" style="left:348px;top:753px;width:1px;height:19px;background:#a0a0a0"></div>
<div class="a" style="left:429px;top:753px;width:1px;height:19px;background:#a0a0a0"></div>
<div class="a" style="left:510px;top:753px;width:1px;height:19px;background:#a0a0a0"></div>
<div class="a" style="left:575px;top:753px;width:1px;height:19px;background:#a0a0a0"></div>
<div class="a" style="left:695px;top:753px;width:1px;height:19px;background:#a0a0a0"></div>
<div class="a" style="left:975px;top:753px;width:1px;height:19px;background:#a0a0a0"></div>
<div class="a" style="left:1056px;top:753px;width:1px;height:19px;background:#a0a0a0"></div>
<div class="a" style="left:1121px;top:753px;width:1px;height:19px;background:#a0a0a0"></div>
<div class="a" style="left:1201px;top:753px;width:1px;height:19px;background:#a0a0a0"></div>
<div class="t" style="left:27px;top:754px;width:400px;text-align:right;">81585</div>
<div class="t" style="left:108px;top:754px;width:400px;text-align:right;">1</div>
<div class="t" style="left:173px;top:754px;width:400px;text-align:right;">1</div>
<div class="t" style="left:577px;top:754px;">EPGDX2</div>
<div class="t" style="left:697px;top:754px;font-size:11px">DECORA TWIN (2) OUTLET FACEPLATE IVORY</div>
<div class="t" style="left:654px;top:754px;width:400px;text-align:right;">$1.67</div>
<div class="t" style="left:719px;top:754px;width:400px;text-align:right;">$1.67</div>
<div class="t" style="left:799px;top:754px;width:400px;text-align:right;">6/26/18</div>
<div class="a" style="left:270px;top:772px;width:17px;height:18px;background:#c8c8c8;border-left:1px solid #fff;border-top:1px solid #fff"></div>
<div class="a" style="left:288px;top:772px;width:913px;height:18px;background:#f0f0f0"></div>
<div class="a" style="left:270px;top:790px;width:932px;height:1px;background:#a0a0a0"></div>
<div class="a" style="left:287px;top:772px;width:1px;height:19px;background:#a0a0a0"></div>
<div class="a" style="left:348px;top:772px;width:1px;height:19px;background:#a0a0a0"></div>
<div class="a" style="left:429px;top:772px;width:1px;height:19px;background:#a0a0a0"></div>
<div class="a" style="left:510px;top:772px;width:1px;height:19px;background:#a0a0a0"></div>
<div class="a" style="left:575px;top:772px;width:1px;height:19px;background:#a0a0a0"></div>
<div class="a" style="left:695px;top:772px;width:1px;height:19px;background:#a0a0a0"></div>
<div class="a" style="left:975px;top:772px;width:1px;height:19px;background:#a0a0a0"></div>
<div class="a" style="left:1056px;top:772px;width:1px;height:19px;background:#a0a0a0"></div>
<div class="a" style="left:1121px;top:772px;width:1px;height:19px;background:#a0a0a0"></div>
<div class="a" style="left:1201px;top:772px;width:1px;height:19px;background:#a0a0a0"></div>
<div class="t" style="left:27px;top:773px;width:400px;text-align:right;">81585</div>
<div class="t" style="left:108px;top:773px;width:400px;text-align:right;">1</div>
<div class="t" style="left:173px;top:773px;width:400px;text-align:right;">1</div>
<div class="t" style="left:577px;top:773px;">EPGHBL4715C</div>
<div class="t" style="left:697px;top:773px;font-size:11px">FLANGED RECPT, TWIST LOCK 15AMP, 125V, 1 PH...</div>
<div class="t" style="left:654px;top:773px;width:400px;text-align:right;">$18.25</div>
<div class="t" style="left:719px;top:773px;width:400px;text-align:right;">$18.25</div>
<div class="t" style="left:799px;top:773px;width:400px;text-align:right;">6/26/18</div>
<div class="a" style="left:288px;top:676px;width:914px;height:20px;border:2px solid #46739f"></div>
<svg class="a" style="left:276px;top:680px;" width="7" height="12" viewBox="0 0 7 12"><path d="M0 0 L6.5 6 L0 12Z" fill="#000"/></svg>
<div class="a" style="left:0px;top:0px;width:1302px;height:2px;background:#0b1a36"></div>
<div class="a" style="left:0px;top:0px;width:2px;height:889px;background:#12264a"></div>
<div class="a" style="left:1300px;top:0px;width:2px;height:889px;background:#12264a"></div>
<div class="a" style="left:1299px;top:2px;width:1px;height:887px;background:#6a86b0"></div></body></html>
